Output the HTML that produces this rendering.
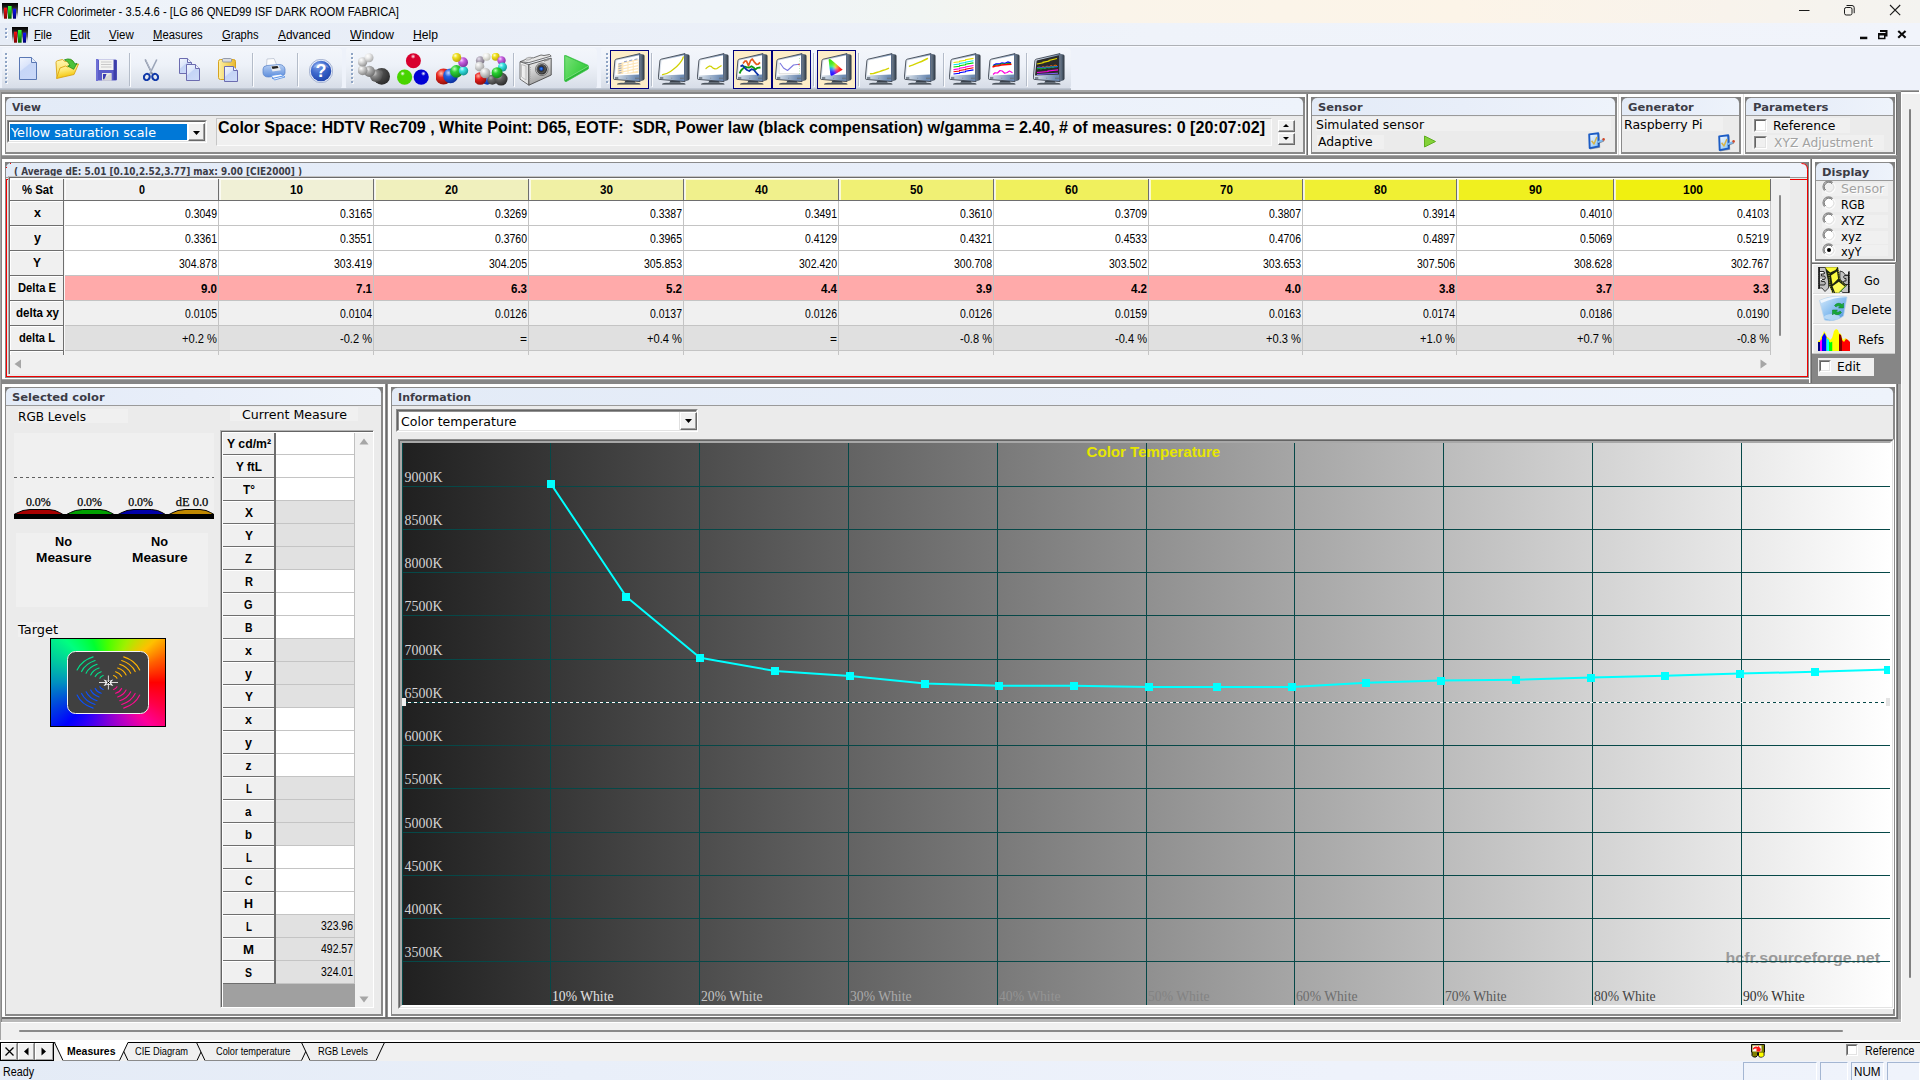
<!DOCTYPE html>
<html lang="en"><head><meta charset="utf-8"><title>HCFR Colorimeter</title>
<style>
html,body{margin:0;padding:0;background:#fff;}
body{width:1920px;height:1080px;overflow:hidden;font-family:"Liberation Sans",sans-serif;font-size:12px;color:#000;}
#app{position:relative;width:1920px;height:1080px;overflow:hidden;background:#fff;}
#app div,#app svg,#app span.a{position:absolute;box-sizing:border-box;}
.t{white-space:nowrap;line-height:1;}
.v{font-family:"DejaVu Sans","Liberation Sans",sans-serif;}
.vb{font-family:"DejaVu Sans","Liberation Sans",sans-serif;font-weight:bold;}
.s{font-family:"Liberation Serif",serif;}
/* group boxes */
.gb{border:1px solid #8a8a8a;border-right:2px solid #8a8a8a;border-bottom:2px solid #8a8a8a;background:#ebebeb;}
.gb>.hd{left:0;top:0;right:0;height:17px;background:linear-gradient(90deg,#e3ebf7 0%,#e8eef9 50%,#eef3fb 100%);border-radius:5px 5px 0 0;}
.gb>.hl{left:0;right:0;top:17px;height:1px;background:#9a9a9a;}
.gb>.cn{left:-1px;top:-1px;width:6px;height:6px;background:#808080;}
.gb>.cn.r{left:auto;right:-2px;}
.gt{font-family:"DejaVu Sans","Liberation Sans",sans-serif;font-weight:bold;font-size:11px;color:#40404a;white-space:nowrap;line-height:1;}

</style></head>
<body>
<div id="app">
<!-- titlebar -->
<div style="left:0px;top:0px;width:1920px;height:23px;background:linear-gradient(90deg,#eef3fa 0%,#eff4f8 38%,#f1f5f3 48%,#faf4ea 58%,#fcf4e8 76%,#f8f3ec 90%,#f4f3f0 100%);"></div><svg style="left:2px;top:3px;width:16px;height:16px" viewBox="0 0 16 16"><defs><linearGradient id="ai1a" x1="0" y1="0" x2="0" y2="1"><stop offset="0" stop-color="#000"/><stop offset="0.250" stop-color="#1c1c1c"/><stop offset="0.600" stop-color="#555" stop-opacity="0.850"/><stop offset="1" stop-color="#ddd" stop-opacity="0.100"/></linearGradient><linearGradient id="ai1r" x1="0" y1="0" x2="0" y2="1"><stop offset="0" stop-color="#ff1010"/><stop offset="1" stop-color="#7a0000"/></linearGradient><linearGradient id="ai1g" x1="0" y1="0" x2="0" y2="1"><stop offset="0" stop-color="#30ff30"/><stop offset="1" stop-color="#005c00"/></linearGradient><linearGradient id="ai1b" x1="0" y1="0" x2="0" y2="1"><stop offset="0" stop-color="#1010ff"/><stop offset="1" stop-color="#000070"/></linearGradient></defs><rect x="0" y="0" width="16" height="16" fill="url(#ai1a)"/><rect x="2" y="4.700" width="3" height="11" fill="url(#ai1r)"/><rect x="6" y="3" width="3.600" height="12.700" fill="url(#ai1g)"/><rect x="11" y="5.700" width="3" height="10" fill="url(#ai1b)"/></svg><div class="t" style="left:23.40px;top:3.84px;font-family:'Liberation Sans',sans-serif;font-size:12px;line-height:16px;color:#000;transform:scaleX(0.9366);transform-origin:0 0;">HCFR Colorimeter - 3.5.4.6 - [LG 86 QNED99 ISF DARK ROOM FABRICA]</div><svg style="left:1780px;top:0;width:140px;height:23px" viewBox="0 0 140 23"><g stroke="#1a1a1a" stroke-width="1" fill="none"><path d="M19 10.500h10.500"/><rect x="64.500" y="7.500" width="7.500" height="7.500" rx="1.700"/><path d="M66.500 5.500h5.500a2.200 2.200 0 0 1 2.200 2.200v5.500"/><path d="M110 5l10.200 10.200M120.200 5l-10.200 10.200" stroke-width="1.100"/></g></svg>
<!-- menubar -->
<div style="left:0px;top:23px;width:1920px;height:23px;background:linear-gradient(90deg,#e6ecf6 0%,#eaeff8 30%,#eff3fa 60%,#f1f4fb 100%);"></div><div style="left:0px;top:45px;width:1920px;height:1px;background:#aeb1b6;"></div><div style="left:6px;top:29px;width:2px;height:2px;background:#fff;"></div><div style="left:5px;top:28px;width:2px;height:2px;background:#8fa4c8;"></div><div style="left:6px;top:33px;width:2px;height:2px;background:#fff;"></div><div style="left:5px;top:32px;width:2px;height:2px;background:#8fa4c8;"></div><div style="left:6px;top:37px;width:2px;height:2px;background:#fff;"></div><div style="left:5px;top:36px;width:2px;height:2px;background:#8fa4c8;"></div><svg style="left:12px;top:27px;width:16px;height:16px" viewBox="0 0 16 16"><defs><linearGradient id="ai2a" x1="0" y1="0" x2="0" y2="1"><stop offset="0" stop-color="#000"/><stop offset="0.250" stop-color="#1c1c1c"/><stop offset="0.600" stop-color="#555" stop-opacity="0.850"/><stop offset="1" stop-color="#ddd" stop-opacity="0.100"/></linearGradient><linearGradient id="ai2r" x1="0" y1="0" x2="0" y2="1"><stop offset="0" stop-color="#ff1010"/><stop offset="1" stop-color="#7a0000"/></linearGradient><linearGradient id="ai2g" x1="0" y1="0" x2="0" y2="1"><stop offset="0" stop-color="#30ff30"/><stop offset="1" stop-color="#005c00"/></linearGradient><linearGradient id="ai2b" x1="0" y1="0" x2="0" y2="1"><stop offset="0" stop-color="#1010ff"/><stop offset="1" stop-color="#000070"/></linearGradient></defs><rect x="0" y="0" width="16" height="16" fill="url(#ai2a)"/><rect x="2" y="4.700" width="3" height="11" fill="url(#ai2r)"/><rect x="6" y="3" width="3.600" height="12.700" fill="url(#ai2g)"/><rect x="11" y="5.700" width="3" height="10" fill="url(#ai2b)"/></svg><div class="t" style="left:33.60px;top:26.84px;font-family:'Liberation Sans',sans-serif;font-size:12px;line-height:16px;color:#000;transform:scaleX(0.9305);transform-origin:0 0;"><span style="text-decoration:underline;text-underline-offset:1px;">F</span>ile</div><div class="t" style="left:70.00px;top:26.84px;font-family:'Liberation Sans',sans-serif;font-size:12px;line-height:16px;color:#000;transform:scaleX(0.9668);transform-origin:0 0;"><span style="text-decoration:underline;text-underline-offset:1px;">E</span>dit</div><div class="t" style="left:109.30px;top:26.84px;font-family:'Liberation Sans',sans-serif;font-size:12px;line-height:16px;color:#000;transform:scaleX(0.9575);transform-origin:0 0;"><span style="text-decoration:underline;text-underline-offset:1px;">V</span>iew</div><div class="t" style="left:153.40px;top:26.84px;font-family:'Liberation Sans',sans-serif;font-size:12px;line-height:16px;color:#000;transform:scaleX(0.9414);transform-origin:0 0;"><span style="text-decoration:underline;text-underline-offset:1px;">M</span>easures</div><div class="t" style="left:222.20px;top:26.84px;font-family:'Liberation Sans',sans-serif;font-size:12px;line-height:16px;color:#000;transform:scaleX(0.9299);transform-origin:0 0;"><span style="text-decoration:underline;text-underline-offset:1px;">G</span>raphs</div><div class="t" style="left:278.00px;top:26.84px;font-family:'Liberation Sans',sans-serif;font-size:12px;line-height:16px;color:#000;transform:scaleX(0.9855);transform-origin:0 0;"><span style="text-decoration:underline;text-underline-offset:1px;">A</span>dvanced</div><div class="t" style="left:350.00px;top:26.84px;font-family:'Liberation Sans',sans-serif;font-size:12px;line-height:16px;color:#000;transform:scaleX(1.0307);transform-origin:0 0;"><span style="text-decoration:underline;text-underline-offset:1px;">W</span>indow</div><div class="t" style="left:413.00px;top:26.84px;font-family:'Liberation Sans',sans-serif;font-size:12px;line-height:16px;color:#000;transform:scaleX(1.0127);transform-origin:0 0;"><span style="text-decoration:underline;text-underline-offset:1px;">H</span>elp</div><svg style="left:1850px;top:26px;width:70px;height:18px" viewBox="0 0 70 18"><g fill="#0a0a0a" stroke="none"><rect x="10" y="10.700" width="7.300" height="2.500"/><path d="M30 4h7.500v6.500h-2v-4.500h-5.500zM28 7h7.500v6.200h-7.500zM29.500 9.500v2.200h4.500v-2.200z" fill-rule="evenodd"/><path d="M47.500 5.700l1.500-1.500 2.900 2.900 2.900-2.900 1.500 1.500-2.900 2.600 2.900 2.600-1.500 1.500-2.900-2.900-2.900 2.900-1.500-1.500 2.900-2.600z"/></g></svg>
<!-- toolbar -->
<div style="left:0px;top:46px;width:1920px;height:44px;background:#eef2fa;"></div><div style="left:0px;top:46px;width:1920px;height:1px;background:#f8faff;"></div><div style="left:2px;top:48px;width:340px;height:41px;background:linear-gradient(180deg,#f3f6fb 0%,#eef2f9 40%,#e3e8f0 70%,#d6dce7 100%);border-radius:2px 4px 4px 2px;"></div><div style="left:346px;top:48px;width:251px;height:41px;background:linear-gradient(180deg,#f3f6fb 0%,#eef2f9 40%,#e3e8f0 70%,#d6dce7 100%);border-radius:2px 4px 4px 2px;"></div><div style="left:601px;top:48px;width:470px;height:41px;background:linear-gradient(180deg,#f3f6fb 0%,#eef2f9 40%,#e3e8f0 70%,#d6dce7 100%);border-radius:2px 4px 4px 2px;"></div><div style="left:0px;top:88px;width:1071px;height:2px;background:linear-gradient(180deg,#c6ceda,#aab1bb);"></div><div style="left:5px;top:53px;width:2px;height:30px;background:repeating-linear-gradient(180deg,#8ea4c4 0 2px,transparent 2px 4px);"></div><div style="left:6px;top:54px;width:2px;height:30px;background:repeating-linear-gradient(180deg,#ffffff 0 2px,transparent 2px 4px);opacity:.8;"></div><div style="left:5px;top:53px;width:2px;height:30px;background:repeating-linear-gradient(180deg,#8ea4c4 0 2px,transparent 2px 4px);"></div><div style="left:351px;top:53px;width:2px;height:30px;background:repeating-linear-gradient(180deg,#8ea4c4 0 2px,transparent 2px 4px);"></div><div style="left:352px;top:54px;width:2px;height:30px;background:repeating-linear-gradient(180deg,#ffffff 0 2px,transparent 2px 4px);opacity:.8;"></div><div style="left:351px;top:53px;width:2px;height:30px;background:repeating-linear-gradient(180deg,#8ea4c4 0 2px,transparent 2px 4px);"></div><div style="left:606px;top:53px;width:2px;height:30px;background:repeating-linear-gradient(180deg,#8ea4c4 0 2px,transparent 2px 4px);"></div><div style="left:607px;top:54px;width:2px;height:30px;background:repeating-linear-gradient(180deg,#ffffff 0 2px,transparent 2px 4px);opacity:.8;"></div><div style="left:606px;top:53px;width:2px;height:30px;background:repeating-linear-gradient(180deg,#8ea4c4 0 2px,transparent 2px 4px);"></div><svg style="left:19px;top:57px;width:18px;height:23px" viewBox="0 0 18 23"><defs><linearGradient id="g1" x1="0" y1="0" x2="0.6" y2="1"><stop offset="0" stop-color="#f2f6fe"/><stop offset="0.45" stop-color="#dbe5fb"/><stop offset="0.5" stop-color="#c6d6f7"/><stop offset="1" stop-color="#c9d8f8"/></linearGradient></defs><path d="M0.500 0.500h12l5 5v17h-17z" fill="url(#g1)" stroke="#5a78b4" stroke-width="1"/><path d="M12.500 0.500v5h5" fill="#e6eefc" stroke="#5a78b4" stroke-width="1"/></svg><svg style="left:55px;top:58px;width:24px;height:22px" viewBox="0 0 24 22"><defs><linearGradient id="g2" x1="0" y1="0" x2="0" y2="1"><stop offset="0" stop-color="#fff6b0"/><stop offset="1" stop-color="#f8d84a"/></linearGradient><linearGradient id="g3" x1="0" y1="0" x2="0.3" y2="1"><stop offset="0" stop-color="#fff9d0"/><stop offset="0.5" stop-color="#fde870"/><stop offset="1" stop-color="#f3c200"/></linearGradient></defs><path d="M1 4.500q0-1.500 1.500-1.800l5-1.200 2.500 2 7-1.500v10l-15 8z" fill="url(#g2)" stroke="#d9a514" stroke-width="0.900"/><path d="M1.500 20.500l3.500-10.500 5.500-2 2 1 11-3-4.500 10.500z" fill="url(#g3)" stroke="#d9a514" stroke-width="0.900"/><path d="M9.500 1.800q7-3 10.500 4.200l2-0.700-3.300 6-6-3.200 2.300-0.800q-2-4.300-5.500-5.500z" fill="#4cc23a" stroke="#1f8a18" stroke-width="0.800"/></svg><svg style="left:96px;top:59px;width:21px;height:22px" viewBox="0 0 21 22"><path d="M1.500 0.500h18q1.500 0 1.500 1.500v18q0 1.500-1.500 1.500h-18q-1.500 0-1.500-1.500v-18q0-1.500 1.500-1.500z" fill="#5a5cc8"/><rect x="0" y="0" width="2" height="22" fill="#6e70d6"/><rect x="17.500" y="1" width="3" height="20" fill="#3c3ea8"/><rect x="3" y="0.500" width="14.500" height="10.500" fill="#f4f4f2"/><path d="M5 3h10.500M5 5.500h10.500M5 8h10.500" stroke="#c4c4c4" stroke-width="0.900"/><rect x="6" y="14" width="9.500" height="7.500" fill="#e9e9e6"/><path d="M7 15h3.500l-2 5.500h-1.500z" fill="#3a3cb0"/><path d="M15.500 14v7.500h-9.500z" fill="#cfcfca" opacity="0.700"/></svg><div style="left:129px;top:53px;width:1px;height:33px;background:#b4bcc9;"></div><div style="left:130px;top:54px;width:1px;height:33px;background:#fbfcfe;"></div><svg style="left:143px;top:59px;width:16px;height:22px" viewBox="0 0 16 22"><path d="M2.200 0.500l7.300 15" stroke="#6e7a92" stroke-width="1.600" fill="none"/><path d="M13.800 0.500l-7.300 15" stroke="#9aa4b8" stroke-width="1.600" fill="none"/><path d="M2.500 0.800l6 12.500" stroke="#e6eaf2" stroke-width="0.600"/><ellipse cx="3.800" cy="18" rx="2.800" ry="3.200" transform="rotate(25 3.800 18)" fill="none" stroke="#1038a8" stroke-width="2.100"/><ellipse cx="12.200" cy="18" rx="2.800" ry="3.200" transform="rotate(-25 12.200 18)" fill="none" stroke="#1038a8" stroke-width="2.100"/></svg><svg style="left:179px;top:58px;width:21px;height:23px" viewBox="0 0 21 23"><defs><linearGradient id="g4" x1="0" y1="0" x2="0.700" y2="1"><stop offset="0" stop-color="#f4f7fe"/><stop offset="0.450" stop-color="#dce6fb"/><stop offset="0.500" stop-color="#c4d4f6"/><stop offset="1" stop-color="#cddaf8"/></linearGradient></defs><path d="M0.5 0.5h8l4 4v11h-12z" fill="url(#g4)" stroke="#6c6cb0" stroke-width="1"/><path d="M8.5 0.5v4h4" fill="#eef2fd" stroke="#6c6cb0" stroke-width="1"/><path d="M7.5 6.5h9l4 4v12h-13z" fill="url(#g4)" stroke="#6c6cb0" stroke-width="1"/><path d="M16.5 6.5v4h4" fill="#eef2fd" stroke="#6c6cb0" stroke-width="1"/></svg><svg style="left:218px;top:58px;width:20px;height:24px" viewBox="0 0 20 24"><defs><linearGradient id="g5" x1="0" y1="0" x2="0.700" y2="1"><stop offset="0" stop-color="#f4f7fe"/><stop offset="0.450" stop-color="#dce6fb"/><stop offset="0.500" stop-color="#c4d4f6"/><stop offset="1" stop-color="#cddaf8"/></linearGradient><linearGradient id="g6" x1="0" y1="0" x2="1" y2="0"><stop offset="0" stop-color="#fdf0a8"/><stop offset="0.500" stop-color="#f3d768"/><stop offset="1" stop-color="#e8b830"/></linearGradient></defs><rect x="0.500" y="1.500" width="17" height="20" rx="2" fill="url(#g6)" stroke="#d6a21e" stroke-width="1"/><rect x="4.500" y="0.500" width="9" height="3.500" rx="1" fill="#d8dbe2" stroke="#8c93a4" stroke-width="0.900"/><path d="M6.5 8.5h9l4 4v11h-13z" fill="url(#g5)" stroke="#6c6cb0" stroke-width="1"/><path d="M15.5 8.5v4h4" fill="#eef2fd" stroke="#6c6cb0" stroke-width="1"/></svg><div style="left:252px;top:53px;width:1px;height:33px;background:#b4bcc9;"></div><div style="left:253px;top:54px;width:1px;height:33px;background:#fbfcfe;"></div><svg style="left:262px;top:58px;width:24px;height:23px" viewBox="0 0 24 23"><defs><linearGradient id="g7" x1="0" y1="0" x2="0" y2="1"><stop offset="0" stop-color="#b8d0f4"/><stop offset="1" stop-color="#5e8edc"/></linearGradient></defs><path d="M5 1l7-0.500 3 7-10.500 1z" fill="#fdfdfd" stroke="#b4bccb" stroke-width="0.700"/><path d="M1 11q0-3 4-3.500l12-1q5 0 6 4.500v4q0 2-2.500 2.500l-14 1.500q-5 0-5.500-4z" fill="url(#g7)" stroke="#5580c8" stroke-width="0.700"/><path d="M8.500 8l8-0.800 2.500 5-8.500 1.200z" fill="#e8ebf0"/><path d="M9.500 8.500l6-0.600 1 2.200-6 0.800z" fill="#222"/><path d="M9 17.500l10-1.500 4 3-10.500 3z" fill="#fafcff" stroke="#5d94e6" stroke-width="0.900"/><path d="M10 20.500l11-2.500" stroke="#5d94e6" stroke-width="1.200"/></svg><div style="left:297px;top:53px;width:1px;height:33px;background:#b4bcc9;"></div><div style="left:298px;top:54px;width:1px;height:33px;background:#fbfcfe;"></div><svg style="left:309px;top:59px;width:24px;height:24px" viewBox="0 0 24 24"><defs><radialGradient id="g8" cx="0.350" cy="0.250" r="0.850"><stop offset="0" stop-color="#7da0ea"/><stop offset="0.450" stop-color="#3c68cc"/><stop offset="1" stop-color="#1c40a8"/></radialGradient></defs><circle cx="12" cy="12" r="11.700" fill="#e8eefa" stroke="#7b8db8" stroke-width="0.600"/><circle cx="12" cy="12" r="10.300" fill="url(#g8)"/><path d="M4 9a8.500 7 0 0 1 16 0q-8-3.500-16 0z" fill="#fff" opacity="0.250"/><text x="12" y="18.300" font-family="Liberation Sans,sans-serif" font-weight="bold" font-size="18" fill="#fff" text-anchor="middle">?</text></svg><svg style="left:358px;top:53px;width:33px;height:33px" viewBox="0 0 33 33"><defs><radialGradient id="g9" cx="0.350" cy="0.300" r="0.750"><stop offset="0" stop-color="#8c8c8c"/><stop offset="0.350" stop-color="#4a4a4a"/><stop offset="1" stop-color="#2a2a2a"/></radialGradient></defs><circle cx="23.7" cy="23.4" r="8.3" fill="url(#g9)"/><defs><radialGradient id="g10" cx="0.350" cy="0.300" r="0.750"><stop offset="0" stop-color="#d8d8d8"/><stop offset="0.350" stop-color="#8a8a8a"/><stop offset="1" stop-color="#4a4a4a"/></radialGradient></defs><circle cx="18.1" cy="22.8" r="6.2" fill="url(#g10)"/><defs><radialGradient id="g11" cx="0.350" cy="0.300" r="0.750"><stop offset="0" stop-color="#f0f0f0"/><stop offset="0.350" stop-color="#b0b0b0"/><stop offset="1" stop-color="#6a6a6a"/></radialGradient></defs><circle cx="11.4" cy="18.4" r="5.6" fill="url(#g11)"/><defs><radialGradient id="g12" cx="0.350" cy="0.300" r="0.750"><stop offset="0" stop-color="#ffffff"/><stop offset="0.350" stop-color="#d0d0d0"/><stop offset="1" stop-color="#848484"/></radialGradient></defs><circle cx="4.6" cy="17.3" r="4.9" fill="url(#g12)"/><defs><radialGradient id="g13" cx="0.350" cy="0.300" r="0.750"><stop offset="0" stop-color="#ffffff"/><stop offset="0.350" stop-color="#dcdcdc"/><stop offset="1" stop-color="#909090"/></radialGradient></defs><circle cx="4.6" cy="8.9" r="4.7" fill="url(#g13)"/><defs><radialGradient id="g14" cx="0.350" cy="0.300" r="0.750"><stop offset="0" stop-color="#ffffff"/><stop offset="0.350" stop-color="#ececec"/><stop offset="1" stop-color="#a8a8a8"/></radialGradient></defs><circle cx="11" cy="4.8" r="4.5" fill="url(#g14)"/></svg><svg style="left:396px;top:53px;width:34px;height:33px" viewBox="0 0 34 33"><circle cx="17.4" cy="7.7" r="7.5" fill="#d8002e"/><defs><radialGradient id="g15"><stop offset="0" stop-color="#fff" stop-opacity="0.950"/><stop offset="1" stop-color="#fff" stop-opacity="0"/></radialGradient></defs><circle cx="17.099999999999998" cy="3.5" r="2.40" fill="url(#g15)"/><circle cx="8.6" cy="24.1" r="7.6" fill="#48d400"/><defs><radialGradient id="g16"><stop offset="0" stop-color="#fff" stop-opacity="0.950"/><stop offset="1" stop-color="#fff" stop-opacity="0"/></radialGradient></defs><circle cx="6.6" cy="20.6" r="2.43" fill="url(#g16)"/><circle cx="25.2" cy="24.1" r="7.6" fill="#0000d4"/><defs><radialGradient id="g17"><stop offset="0" stop-color="#fff" stop-opacity="0.950"/><stop offset="1" stop-color="#fff" stop-opacity="0"/></radialGradient></defs><circle cx="27.4" cy="20.6" r="2.43" fill="url(#g17)"/></svg><svg style="left:436px;top:53px;width:33px;height:33px" viewBox="0 0 33 33"><defs><radialGradient id="g18" cx="0.350" cy="0.300" r="0.750"><stop offset="0" stop-color="#ffc0b0"/><stop offset="0.350" stop-color="#e82820"/><stop offset="1" stop-color="#8c0c08"/></radialGradient></defs><circle cx="7.5" cy="23.6" r="8" fill="url(#g18)"/><defs><radialGradient id="g19" cx="0.350" cy="0.300" r="0.750"><stop offset="0" stop-color="#c0d8ff"/><stop offset="0.350" stop-color="#2060e0"/><stop offset="1" stop-color="#0a2c98"/></radialGradient></defs><circle cx="14.6" cy="22.8" r="7.4" fill="url(#g19)"/><defs><radialGradient id="g20" cx="0.350" cy="0.300" r="0.750"><stop offset="0" stop-color="#c0ffb8"/><stop offset="0.350" stop-color="#30d038"/><stop offset="1" stop-color="#108018"/></radialGradient></defs><circle cx="20.4" cy="18.4" r="6.3" fill="url(#g20)"/><defs><radialGradient id="g21" cx="0.350" cy="0.300" r="0.750"><stop offset="0" stop-color="#d0ffff"/><stop offset="0.350" stop-color="#38e0e0"/><stop offset="1" stop-color="#109090"/></radialGradient></defs><circle cx="27.5" cy="17.7" r="4.7" fill="url(#g21)"/><defs><radialGradient id="g22" cx="0.350" cy="0.300" r="0.750"><stop offset="0" stop-color="#f8d0ff"/><stop offset="0.350" stop-color="#c860e0"/><stop offset="1" stop-color="#7c2c98"/></radialGradient></defs><circle cx="27.1" cy="9.2" r="4.9" fill="url(#g22)"/><defs><radialGradient id="g23" cx="0.350" cy="0.300" r="0.750"><stop offset="0" stop-color="#ffffd0"/><stop offset="0.350" stop-color="#f0e020"/><stop offset="1" stop-color="#b8a008"/></radialGradient></defs><circle cx="20.7" cy="4.5" r="4.5" fill="url(#g23)"/></svg><svg style="left:475px;top:53px;width:33px;height:33px" viewBox="0 0 33 33"><defs><radialGradient id="g24" cx="0.350" cy="0.300" r="0.750"><stop offset="0" stop-color="#a8c8ff"/><stop offset="0.350" stop-color="#1858e0"/><stop offset="1" stop-color="#0a2c98"/></radialGradient></defs><circle cx="12.3" cy="26.8" r="5" fill="url(#g24)"/><defs><radialGradient id="g25" cx="0.350" cy="0.300" r="0.750"><stop offset="0" stop-color="#b0b0b0"/><stop offset="0.350" stop-color="#686868"/><stop offset="1" stop-color="#383838"/></radialGradient></defs><circle cx="17.3" cy="26.8" r="5" fill="url(#g25)"/><defs><radialGradient id="g26" cx="0.350" cy="0.300" r="0.750"><stop offset="0" stop-color="#a8a8a8"/><stop offset="0.350" stop-color="#606060"/><stop offset="1" stop-color="#282828"/></radialGradient></defs><circle cx="26.1" cy="26.1" r="6.5" fill="url(#g26)"/><defs><radialGradient id="g27" cx="0.350" cy="0.300" r="0.750"><stop offset="0" stop-color="#ffb0a0"/><stop offset="0.350" stop-color="#e82020"/><stop offset="1" stop-color="#8c0c08"/></radialGradient></defs><circle cx="5.2" cy="25.5" r="6.3" fill="url(#g27)"/><defs><radialGradient id="g28" cx="0.350" cy="0.300" r="0.750"><stop offset="0" stop-color="#e8e0f0"/><stop offset="0.350" stop-color="#b0a8b8"/><stop offset="1" stop-color="#787080"/></radialGradient></defs><circle cx="5.2" cy="7.5" r="4.3" fill="url(#g28)"/><defs><radialGradient id="g29" cx="0.350" cy="0.300" r="0.750"><stop offset="0" stop-color="#ffffff"/><stop offset="0.350" stop-color="#dcdcdc"/><stop offset="1" stop-color="#9c9c9c"/></radialGradient></defs><circle cx="4.5" cy="13.6" r="4.8" fill="url(#g29)"/><defs><radialGradient id="g30" cx="0.350" cy="0.300" r="0.750"><stop offset="0" stop-color="#ffffff"/><stop offset="0.350" stop-color="#d8d8d8"/><stop offset="1" stop-color="#909090"/></radialGradient></defs><circle cx="10.2" cy="20" r="5.2" fill="url(#g30)"/><defs><radialGradient id="g31" cx="0.350" cy="0.300" r="0.750"><stop offset="0" stop-color="#ffffff"/><stop offset="0.350" stop-color="#f0f0ec"/><stop offset="1" stop-color="#c0c0b4"/></radialGradient></defs><circle cx="11.6" cy="3.8" r="4" fill="url(#g31)"/><defs><radialGradient id="g32" cx="0.350" cy="0.300" r="0.750"><stop offset="0" stop-color="#ffffc8"/><stop offset="0.350" stop-color="#f0e020"/><stop offset="1" stop-color="#b8a008"/></radialGradient></defs><circle cx="20.7" cy="3.8" r="4" fill="url(#g32)"/><defs><radialGradient id="g33" cx="0.350" cy="0.300" r="0.750"><stop offset="0" stop-color="#f8d0ff"/><stop offset="0.350" stop-color="#c860e0"/><stop offset="1" stop-color="#7c2c98"/></radialGradient></defs><circle cx="26.5" cy="7.5" r="4.2" fill="url(#g33)"/><defs><radialGradient id="g34" cx="0.350" cy="0.300" r="0.750"><stop offset="0" stop-color="#d0ffff"/><stop offset="0.350" stop-color="#38e0e0"/><stop offset="1" stop-color="#109090"/></radialGradient></defs><circle cx="27.5" cy="14" r="4.5" fill="url(#g34)"/><defs><radialGradient id="g35" cx="0.350" cy="0.300" r="0.750"><stop offset="0" stop-color="#b8ffb0"/><stop offset="0.350" stop-color="#28d030"/><stop offset="1" stop-color="#108018"/></radialGradient></defs><circle cx="22.1" cy="19.7" r="5.5" fill="url(#g35)"/></svg><div style="left:513px;top:53px;width:1px;height:33px;background:#b4bcc9;"></div><div style="left:514px;top:54px;width:1px;height:33px;background:#fbfcfe;"></div><svg style="left:519px;top:54px;width:34px;height:32px" viewBox="0 0 34 32"><defs><linearGradient id="g36" x1="0" y1="0" x2="0.300" y2="1"><stop offset="0" stop-color="#f4f4f4"/><stop offset="0.500" stop-color="#d0d0d0"/><stop offset="1" stop-color="#9c9c9c"/></linearGradient><linearGradient id="g38" x1="0" y1="0" x2="1" y2="0"><stop offset="0" stop-color="#f8f8f8"/><stop offset="1" stop-color="#dcdcdc"/></linearGradient><radialGradient id="g37" cx="0.450" cy="0.450" r="0.550"><stop offset="0" stop-color="#40a0ff"/><stop offset="0.250" stop-color="#1048c0"/><stop offset="0.450" stop-color="#303030"/><stop offset="0.700" stop-color="#585858"/><stop offset="1" stop-color="#202020"/></radialGradient></defs><path d="M1 5.800l9-3.800 4.500-0.200 7.500-2.800 3 0.500 5.500-1 1.700 1.600-22.300 6.500z" transform="translate(0 2)" fill="#e8e8e8" stroke="#505050" stroke-width="0.800"/><path d="M1 7.800l8.900 2.800v20.600l-8.900-6.100z" fill="url(#g38)" stroke="#505050" stroke-width="0.800"/><path d="M2.500 10.500l4.500 1.500v14l-4.500-3z" fill="none" stroke="#b4b4b4" stroke-width="0.800"/><path d="M9.900 10.600l22.300-6.500v16.900l-22.300 10.200z" fill="url(#g36)" stroke="#484848" stroke-width="0.900"/><path d="M11.300 13v16" stroke="#a8a8a8" stroke-width="1.200" stroke-dasharray="1 1.200"/><path d="M25 5.500l5.500-1.600v2.200l-5.500 1.600z" fill="#8c8c8c"/><ellipse cx="9.500" cy="4.700" rx="3" ry="1.300" transform="rotate(-14 9.500 4.700)" fill="#d4d4d4" stroke="#8c8c8c" stroke-width="0.500"/><circle cx="22.800" cy="15.300" r="6.300" fill="#c8c8c8" stroke="#505050" stroke-width="0.700"/><circle cx="22.800" cy="15.300" r="5.200" fill="url(#g37)"/></svg><svg style="left:564px;top:55px;width:25px;height:27px" viewBox="0 0 25 27"><defs><linearGradient id="g39" x1="0" y1="0" x2="1" y2="0.600"><stop offset="0" stop-color="#78e078"/><stop offset="0.600" stop-color="#4cd450"/><stop offset="1" stop-color="#34c83c"/></linearGradient></defs><path d="M0.500 0.800q0-0.900 0.900-0.500l22.400 9.900q0.700 0.400 0.700 1.200v1.800q0 0.700-0.700 1.100l-21.800 12.400q-0.700 0.300-1-0.400l-0.500-1z" fill="#2cb838" stroke="#38c444" stroke-width="0.700"/><path d="M1.200 1l22.600 10-22.600 13z" fill="url(#g39)"/><path d="M1 24.500l23-13.200" stroke="#a0f0a0" stroke-width="0.800" opacity="0.800"/></svg><div style="left:610px;top:50px;width:39px;height:39px;background:#fdedc8;border:1px solid #00007c;"></div><div style="left:733px;top:50px;width:39px;height:39px;background:#fdedc8;border:1px solid #00007c;"></div><div style="left:772px;top:50px;width:39px;height:39px;background:#fdedc8;border:1px solid #00007c;"></div><div style="left:817px;top:50px;width:39px;height:39px;background:#fdedc8;border:1px solid #00007c;"></div><svg style="left:613px;top:53px;width:32px;height:32px" viewBox="0 0 32 32"><defs><linearGradient id="g40" x1="0" y1="0" x2="1" y2="0"><stop offset="0" stop-color="#a8b8cc"/><stop offset="0.350" stop-color="#5a6a7c"/><stop offset="1" stop-color="#2a323c"/></linearGradient><linearGradient id="g41" x1="0" y1="0" x2="1" y2="0.200"><stop offset="0" stop-color="#f0f3f7"/><stop offset="0.450" stop-color="#bccada"/><stop offset="1" stop-color="#6c8ab2"/></linearGradient><linearGradient id="g42" x1="0" y1="0" x2="0" y2="1"><stop offset="0" stop-color="#6a7480"/><stop offset="1" stop-color="#2c3238"/></linearGradient></defs><path d="M12.500 27.500h9l1.200 2.200h-11.400z" fill="#39424c"/><path d="M4 31.500q0-1.700 4-1.800h16q3.500 0.100 3.500 1.800z" fill="url(#g42)"/><path d="M26.800 0.800l3.500 0.600q1.200 0.300 1.200 1.500v22.600q0 1.200-1 1.700l-3.700 1.400z" fill="url(#g40)"/><path d="M3.200 6.200l23.800-5.600v28l-25.800-2.200q-1-0.200-0.900-1.200l1.600-17.500q0.200-1.200 1.300-1.500z" fill="url(#g41)" stroke="#3e4652" stroke-width="0.900"/><path d="M3.600 7.600l22.400-5.300v19.300l-24 1z" fill="#ffffff"/><rect x="2" y="24.300" width="3.300" height="1.400" fill="#5a6470"/><rect x="22" y="24.600" width="4" height="1.500" fill="#6a7888"/><rect x="13" y="24.700" width="1.300" height="1.100" fill="#8a98aa"/><g fill="#fde2ae"><path d="M5 10.500l20.500-4.500v14l-21 1.200z" fill="#fde6b8"/></g><g fill="#fff"><rect x="10.3" y="10.6" width="4.200" height="1.700" transform="skewY(-12) translate(0 2.16)"/><rect x="15.5" y="9.5" width="4.200" height="1.700" transform="skewY(-12) translate(0 3.25)"/><rect x="20.7" y="8.4" width="4.200" height="1.700" transform="skewY(-12) translate(0 4.35)"/><rect x="10.3" y="13.5" width="4.200" height="1.700" transform="skewY(-12) translate(0 2.16)"/><rect x="15.5" y="12.4" width="4.200" height="1.700" transform="skewY(-12) translate(0 3.25)"/><rect x="20.7" y="11.3" width="4.200" height="1.700" transform="skewY(-12) translate(0 4.35)"/><rect x="10.3" y="16.4" width="4.200" height="1.700" transform="skewY(-12) translate(0 2.16)"/><rect x="15.5" y="15.3" width="4.200" height="1.700" transform="skewY(-12) translate(0 3.25)"/><rect x="20.7" y="14.2" width="4.200" height="1.700" transform="skewY(-12) translate(0 4.35)"/><rect x="10.3" y="19.3" width="4.200" height="1.700" transform="skewY(-12) translate(0 2.16)"/><rect x="15.5" y="18.2" width="4.200" height="1.700" transform="skewY(-12) translate(0 3.25)"/><rect x="20.7" y="17.1" width="4.200" height="1.700" transform="skewY(-12) translate(0 4.35)"/></g><g stroke="#8a98c0" stroke-width="0.900"><path d="M5.500 11.0l3-0.600"/><path d="M5.500 13.3l3-0.600"/><path d="M5.500 15.6l3-0.600"/><path d="M5.500 17.9l3-0.600"/><path d="M5.500 20.2l3-0.600"/><path d="M11.0 8.8l3-0.700"/><path d="M16.2 7.7l3-0.700"/><path d="M21.4 6.6l3-0.700"/></g></svg><div style="left:651px;top:53px;width:1px;height:33px;background:#b4bcc9;"></div><div style="left:652px;top:54px;width:1px;height:33px;background:#fbfcfe;"></div><svg style="left:658px;top:53px;width:32px;height:32px" viewBox="0 0 32 32"><defs><linearGradient id="g43" x1="0" y1="0" x2="1" y2="0"><stop offset="0" stop-color="#a8b8cc"/><stop offset="0.350" stop-color="#5a6a7c"/><stop offset="1" stop-color="#2a323c"/></linearGradient><linearGradient id="g44" x1="0" y1="0" x2="1" y2="0.200"><stop offset="0" stop-color="#f0f3f7"/><stop offset="0.450" stop-color="#bccada"/><stop offset="1" stop-color="#6c8ab2"/></linearGradient><linearGradient id="g45" x1="0" y1="0" x2="0" y2="1"><stop offset="0" stop-color="#6a7480"/><stop offset="1" stop-color="#2c3238"/></linearGradient></defs><path d="M12.500 27.500h9l1.200 2.200h-11.400z" fill="#39424c"/><path d="M4 31.500q0-1.700 4-1.800h16q3.500 0.100 3.500 1.800z" fill="url(#g45)"/><path d="M26.800 0.800l3.500 0.600q1.200 0.300 1.200 1.500v22.600q0 1.200-1 1.700l-3.700 1.400z" fill="url(#g43)"/><path d="M3.200 6.200l23.800-5.600v28l-25.800-2.200q-1-0.200-0.900-1.200l1.600-17.500q0.200-1.200 1.300-1.500z" fill="url(#g44)" stroke="#3e4652" stroke-width="0.900"/><path d="M3.600 7.600l22.400-5.300v19.300l-24 1z" fill="#ffffff"/><rect x="2" y="24.300" width="3.300" height="1.400" fill="#5a6470"/><rect x="22" y="24.600" width="4" height="1.500" fill="#6a7888"/><rect x="13" y="24.700" width="1.300" height="1.100" fill="#8a98aa"/><path d="M4.500 21.600q3.500-0.200 8-3.200 7.500-5 11-10.500 1.500-2.300 1.800-4" fill="none" stroke="#d0d000" stroke-width="1.250" stroke-linecap="round"/></svg><svg style="left:697px;top:53px;width:32px;height:32px" viewBox="0 0 32 32"><defs><linearGradient id="g46" x1="0" y1="0" x2="1" y2="0"><stop offset="0" stop-color="#a8b8cc"/><stop offset="0.350" stop-color="#5a6a7c"/><stop offset="1" stop-color="#2a323c"/></linearGradient><linearGradient id="g47" x1="0" y1="0" x2="1" y2="0.200"><stop offset="0" stop-color="#f0f3f7"/><stop offset="0.450" stop-color="#bccada"/><stop offset="1" stop-color="#6c8ab2"/></linearGradient><linearGradient id="g48" x1="0" y1="0" x2="0" y2="1"><stop offset="0" stop-color="#6a7480"/><stop offset="1" stop-color="#2c3238"/></linearGradient></defs><path d="M12.500 27.500h9l1.200 2.200h-11.400z" fill="#39424c"/><path d="M4 31.500q0-1.700 4-1.800h16q3.500 0.100 3.500 1.800z" fill="url(#g48)"/><path d="M26.800 0.800l3.500 0.600q1.200 0.300 1.200 1.500v22.600q0 1.200-1 1.700l-3.700 1.400z" fill="url(#g46)"/><path d="M3.200 6.200l23.800-5.600v28l-25.800-2.200q-1-0.200-0.900-1.200l1.600-17.500q0.200-1.200 1.300-1.500z" fill="url(#g47)" stroke="#3e4652" stroke-width="0.900"/><path d="M3.600 7.600l22.400-5.300v19.300l-24 1z" fill="#ffffff"/><rect x="2" y="24.300" width="3.300" height="1.400" fill="#5a6470"/><rect x="22" y="24.600" width="4" height="1.500" fill="#6a7888"/><rect x="13" y="24.700" width="1.300" height="1.100" fill="#8a98aa"/><path d="M9 15.500l1.500-1.200 2-1.300 1.500 0.300 2 1.800 2 0.800 2-0.300 2.200-1.600 2-1.200" fill="none" stroke="#d0d000" stroke-width="1.250" stroke-linecap="round" stroke-linejoin="round"/></svg><svg style="left:736px;top:53px;width:32px;height:32px" viewBox="0 0 32 32"><defs><linearGradient id="g49" x1="0" y1="0" x2="1" y2="0"><stop offset="0" stop-color="#a8b8cc"/><stop offset="0.350" stop-color="#5a6a7c"/><stop offset="1" stop-color="#2a323c"/></linearGradient><linearGradient id="g50" x1="0" y1="0" x2="1" y2="0.200"><stop offset="0" stop-color="#f0f3f7"/><stop offset="0.450" stop-color="#bccada"/><stop offset="1" stop-color="#6c8ab2"/></linearGradient><linearGradient id="g51" x1="0" y1="0" x2="0" y2="1"><stop offset="0" stop-color="#6a7480"/><stop offset="1" stop-color="#2c3238"/></linearGradient></defs><path d="M12.500 27.500h9l1.200 2.200h-11.400z" fill="#39424c"/><path d="M4 31.500q0-1.700 4-1.800h16q3.500 0.100 3.500 1.800z" fill="url(#g51)"/><path d="M26.800 0.800l3.500 0.600q1.200 0.300 1.200 1.500v22.600q0 1.200-1 1.700l-3.700 1.400z" fill="url(#g49)"/><path d="M3.200 6.200l23.800-5.600v28l-25.800-2.200q-1-0.200-0.900-1.200l1.600-17.500q0.200-1.200 1.300-1.500z" fill="url(#g50)" stroke="#3e4652" stroke-width="0.900"/><path d="M3.600 7.600l22.400-5.300v19.300l-24 1z" fill="#ffffff"/><rect x="2" y="24.300" width="3.300" height="1.400" fill="#5a6470"/><rect x="22" y="24.600" width="4" height="1.500" fill="#6a7888"/><rect x="13" y="24.700" width="1.300" height="1.100" fill="#8a98aa"/><path d="M7 10.500l2-2.500 1.500 0.200 2 4.500 2-5 1.700-1.700 2 2.800 2.300 2.500 1.800-0.200 1.700-1.800" fill="none" stroke="#e65a1c" stroke-width="1.700" stroke-linejoin="round"/><path d="M3.500 20.500l1.500-3 2-2 1.800-2 2.200 0.800 2.300 0.200 2.200-1.300 2 1.200 1.800 2.200 2.200-1.800 3-0.300" fill="none" stroke="#109a10" stroke-width="1.800" stroke-linejoin="round"/><path d="M4.500 13.500l2-1.300 1.500 2 3 2.800 2.200 1 2.300-1.800 2.500 0.800 2 2.500 2.500 2.800" fill="none" stroke="#0830a8" stroke-width="1.800" stroke-linejoin="round"/></svg><svg style="left:775px;top:53px;width:32px;height:32px" viewBox="0 0 32 32"><defs><linearGradient id="g52" x1="0" y1="0" x2="1" y2="0"><stop offset="0" stop-color="#a8b8cc"/><stop offset="0.350" stop-color="#5a6a7c"/><stop offset="1" stop-color="#2a323c"/></linearGradient><linearGradient id="g53" x1="0" y1="0" x2="1" y2="0.200"><stop offset="0" stop-color="#f0f3f7"/><stop offset="0.450" stop-color="#bccada"/><stop offset="1" stop-color="#6c8ab2"/></linearGradient><linearGradient id="g54" x1="0" y1="0" x2="0" y2="1"><stop offset="0" stop-color="#6a7480"/><stop offset="1" stop-color="#2c3238"/></linearGradient></defs><path d="M12.500 27.500h9l1.200 2.200h-11.400z" fill="#39424c"/><path d="M4 31.500q0-1.700 4-1.800h16q3.500 0.100 3.500 1.800z" fill="url(#g54)"/><path d="M26.800 0.800l3.500 0.600q1.200 0.300 1.200 1.500v22.600q0 1.200-1 1.700l-3.700 1.400z" fill="url(#g52)"/><path d="M3.200 6.200l23.800-5.600v28l-25.800-2.200q-1-0.200-0.900-1.200l1.600-17.500q0.200-1.200 1.300-1.500z" fill="url(#g53)" stroke="#3e4652" stroke-width="0.900"/><path d="M3.600 7.600l22.400-5.300v19.300l-24 1z" fill="#ffffff"/><rect x="2" y="24.300" width="3.300" height="1.400" fill="#5a6470"/><rect x="22" y="24.600" width="4" height="1.500" fill="#6a7888"/><rect x="13" y="24.700" width="1.300" height="1.100" fill="#8a98aa"/><path d="M4 20.800h21.500M4 9.500v11.300" stroke="#c8c8c8" stroke-width="0.700" fill="none"/><path d="M24.500 5v16" stroke="#a8e0a0" stroke-width="0.800" stroke-dasharray="1 1.500"/><path d="M5 10l3.500 5 4 2.500 6-5.500 5.500-0.700" fill="none" stroke="#7c78e0" stroke-width="1.100" stroke-linejoin="round"/><circle cx="24" cy="11.500" r="0.800" fill="#e04040"/></svg><div style="left:813px;top:53px;width:1px;height:33px;background:#b4bcc9;"></div><div style="left:814px;top:54px;width:1px;height:33px;background:#fbfcfe;"></div><svg style="left:820px;top:53px;width:32px;height:32px" viewBox="0 0 32 32"><defs><linearGradient id="g61" x1="0" y1="0" x2="1" y2="0"><stop offset="0" stop-color="#a8b8cc"/><stop offset="0.350" stop-color="#5a6a7c"/><stop offset="1" stop-color="#2a323c"/></linearGradient><linearGradient id="g62" x1="0" y1="0" x2="1" y2="0.200"><stop offset="0" stop-color="#f0f3f7"/><stop offset="0.450" stop-color="#bccada"/><stop offset="1" stop-color="#6c8ab2"/></linearGradient><linearGradient id="g63" x1="0" y1="0" x2="0" y2="1"><stop offset="0" stop-color="#6a7480"/><stop offset="1" stop-color="#2c3238"/></linearGradient></defs><path d="M12.500 27.500h9l1.200 2.200h-11.400z" fill="#39424c"/><path d="M4 31.500q0-1.700 4-1.800h16q3.500 0.100 3.500 1.800z" fill="url(#g63)"/><path d="M26.800 0.800l3.500 0.600q1.200 0.300 1.200 1.500v22.600q0 1.200-1 1.700l-3.700 1.400z" fill="url(#g61)"/><path d="M3.200 6.200l23.800-5.600v28l-25.800-2.200q-1-0.200-0.900-1.200l1.600-17.500q0.200-1.200 1.300-1.500z" fill="url(#g62)" stroke="#3e4652" stroke-width="0.900"/><path d="M3.600 7.600l22.400-5.300v19.300l-24 1z" fill="#ffffff"/><rect x="2" y="24.300" width="3.300" height="1.400" fill="#5a6470"/><rect x="22" y="24.600" width="4" height="1.500" fill="#6a7888"/><rect x="13" y="24.700" width="1.300" height="1.100" fill="#8a98aa"/><path d="M8.600 6.500q1.200-1 2.300 0l11.800 10.300-10.600 5.900q-1.300 0.500-1.700-1z" fill="#ffffff"/><defs><radialGradient id="g55" gradientUnits="userSpaceOnUse" cx="16.5" cy="11.3" r="6"><stop offset="0" stop-color="#f8f000" stop-opacity="0.9"/><stop offset="0.35" stop-color="#f8f000" stop-opacity="0.72"/><stop offset="1" stop-color="#f8f000" stop-opacity="0"/></radialGradient></defs><path d="M8.600 6.500q1.200-1 2.300 0l11.800 10.300-10.600 5.900q-1.300 0.500-1.700-1z" fill="url(#g55)"/><defs><radialGradient id="g56" gradientUnits="userSpaceOnUse" cx="9.8" cy="15" r="6"><stop offset="0" stop-color="#00e8e8" stop-opacity="0.9"/><stop offset="0.35" stop-color="#00e8e8" stop-opacity="0.72"/><stop offset="1" stop-color="#00e8e8" stop-opacity="0"/></radialGradient></defs><path d="M8.600 6.500q1.200-1 2.300 0l11.800 10.300-10.600 5.900q-1.300 0.500-1.700-1z" fill="url(#g56)"/><defs><radialGradient id="g57" gradientUnits="userSpaceOnUse" cx="17" cy="20.3" r="5"><stop offset="0" stop-color="#ff20ff" stop-opacity="0.8"/><stop offset="0.35" stop-color="#ff20ff" stop-opacity="0.64"/><stop offset="1" stop-color="#ff20ff" stop-opacity="0"/></radialGradient></defs><path d="M8.600 6.500q1.200-1 2.300 0l11.800 10.300-10.600 5.900q-1.300 0.500-1.700-1z" fill="url(#g57)"/><defs><radialGradient id="g58" gradientUnits="userSpaceOnUse" cx="9.7" cy="6.5" r="10"><stop offset="0" stop-color="#30e400" stop-opacity="1.0"/><stop offset="0.45" stop-color="#30e400" stop-opacity="0.80"/><stop offset="1" stop-color="#30e400" stop-opacity="0"/></radialGradient></defs><path d="M8.600 6.500q1.200-1 2.300 0l11.800 10.300-10.600 5.900q-1.300 0.500-1.700-1z" fill="url(#g58)"/><defs><radialGradient id="g59" gradientUnits="userSpaceOnUse" cx="11.5" cy="22.5" r="9"><stop offset="0" stop-color="#1400ff" stop-opacity="1.0"/><stop offset="0.4" stop-color="#1400ff" stop-opacity="0.80"/><stop offset="1" stop-color="#1400ff" stop-opacity="0"/></radialGradient></defs><path d="M8.600 6.500q1.200-1 2.300 0l11.800 10.300-10.600 5.900q-1.300 0.500-1.700-1z" fill="url(#g59)"/><defs><radialGradient id="g60" gradientUnits="userSpaceOnUse" cx="22.7" cy="16.8" r="9"><stop offset="0" stop-color="#ff0000" stop-opacity="1.0"/><stop offset="0.4" stop-color="#ff0000" stop-opacity="0.80"/><stop offset="1" stop-color="#ff0000" stop-opacity="0"/></radialGradient></defs><path d="M8.600 6.500q1.200-1 2.300 0l11.800 10.300-10.600 5.900q-1.300 0.500-1.700-1z" fill="url(#g60)"/></svg><div style="left:858px;top:53px;width:1px;height:33px;background:#b4bcc9;"></div><div style="left:859px;top:54px;width:1px;height:33px;background:#fbfcfe;"></div><svg style="left:865px;top:53px;width:32px;height:32px" viewBox="0 0 32 32"><defs><linearGradient id="g64" x1="0" y1="0" x2="1" y2="0"><stop offset="0" stop-color="#a8b8cc"/><stop offset="0.350" stop-color="#5a6a7c"/><stop offset="1" stop-color="#2a323c"/></linearGradient><linearGradient id="g65" x1="0" y1="0" x2="1" y2="0.200"><stop offset="0" stop-color="#f0f3f7"/><stop offset="0.450" stop-color="#bccada"/><stop offset="1" stop-color="#6c8ab2"/></linearGradient><linearGradient id="g66" x1="0" y1="0" x2="0" y2="1"><stop offset="0" stop-color="#6a7480"/><stop offset="1" stop-color="#2c3238"/></linearGradient></defs><path d="M12.500 27.500h9l1.200 2.200h-11.400z" fill="#39424c"/><path d="M4 31.500q0-1.700 4-1.800h16q3.500 0.100 3.500 1.800z" fill="url(#g66)"/><path d="M26.800 0.800l3.500 0.600q1.200 0.300 1.200 1.500v22.600q0 1.200-1 1.700l-3.700 1.400z" fill="url(#g64)"/><path d="M3.200 6.200l23.800-5.600v28l-25.800-2.200q-1-0.200-0.900-1.200l1.600-17.500q0.200-1.200 1.300-1.500z" fill="url(#g65)" stroke="#3e4652" stroke-width="0.900"/><path d="M3.600 7.600l22.400-5.300v19.300l-24 1z" fill="#ffffff"/><rect x="2" y="24.300" width="3.300" height="1.400" fill="#5a6470"/><rect x="22" y="24.600" width="4" height="1.500" fill="#6a7888"/><rect x="13" y="24.700" width="1.300" height="1.100" fill="#8a98aa"/><path d="M5.500 20.800l3-0.300 3-1 3-0.800 3-1.200 3-0.800 3-1.400" fill="none" stroke="#d4d400" stroke-width="1.400" stroke-linecap="round"/></svg><svg style="left:904px;top:53px;width:32px;height:32px" viewBox="0 0 32 32"><defs><linearGradient id="g67" x1="0" y1="0" x2="1" y2="0"><stop offset="0" stop-color="#a8b8cc"/><stop offset="0.350" stop-color="#5a6a7c"/><stop offset="1" stop-color="#2a323c"/></linearGradient><linearGradient id="g68" x1="0" y1="0" x2="1" y2="0.200"><stop offset="0" stop-color="#f0f3f7"/><stop offset="0.450" stop-color="#bccada"/><stop offset="1" stop-color="#6c8ab2"/></linearGradient><linearGradient id="g69" x1="0" y1="0" x2="0" y2="1"><stop offset="0" stop-color="#6a7480"/><stop offset="1" stop-color="#2c3238"/></linearGradient></defs><path d="M12.500 27.500h9l1.200 2.200h-11.400z" fill="#39424c"/><path d="M4 31.500q0-1.700 4-1.800h16q3.500 0.100 3.500 1.800z" fill="url(#g69)"/><path d="M26.800 0.800l3.500 0.600q1.200 0.300 1.200 1.500v22.600q0 1.200-1 1.700l-3.700 1.400z" fill="url(#g67)"/><path d="M3.200 6.200l23.800-5.600v28l-25.800-2.200q-1-0.200-0.900-1.200l1.600-17.500q0.200-1.200 1.300-1.500z" fill="url(#g68)" stroke="#3e4652" stroke-width="0.900"/><path d="M3.600 7.600l22.400-5.300v19.300l-24 1z" fill="#ffffff"/><rect x="2" y="24.300" width="3.300" height="1.400" fill="#5a6470"/><rect x="22" y="24.600" width="4" height="1.500" fill="#6a7888"/><rect x="13" y="24.700" width="1.300" height="1.100" fill="#8a98aa"/><path d="M5.500 13.200l3-1 3-1.300 3-1.200 3-1.200 3-1.500 3-1.500" fill="none" stroke="#d4d400" stroke-width="1.400" stroke-linecap="round"/></svg><div style="left:943px;top:53px;width:1px;height:33px;background:#b4bcc9;"></div><div style="left:944px;top:54px;width:1px;height:33px;background:#fbfcfe;"></div><svg style="left:949px;top:53px;width:32px;height:32px" viewBox="0 0 32 32"><defs><linearGradient id="g70" x1="0" y1="0" x2="1" y2="0"><stop offset="0" stop-color="#a8b8cc"/><stop offset="0.350" stop-color="#5a6a7c"/><stop offset="1" stop-color="#2a323c"/></linearGradient><linearGradient id="g71" x1="0" y1="0" x2="1" y2="0.200"><stop offset="0" stop-color="#f0f3f7"/><stop offset="0.450" stop-color="#bccada"/><stop offset="1" stop-color="#6c8ab2"/></linearGradient><linearGradient id="g72" x1="0" y1="0" x2="0" y2="1"><stop offset="0" stop-color="#6a7480"/><stop offset="1" stop-color="#2c3238"/></linearGradient></defs><path d="M12.500 27.500h9l1.200 2.200h-11.400z" fill="#39424c"/><path d="M4 31.500q0-1.700 4-1.800h16q3.500 0.100 3.500 1.800z" fill="url(#g72)"/><path d="M26.800 0.800l3.500 0.600q1.200 0.300 1.200 1.500v22.600q0 1.200-1 1.700l-3.700 1.400z" fill="url(#g70)"/><path d="M3.200 6.200l23.800-5.600v28l-25.800-2.200q-1-0.200-0.900-1.200l1.600-17.500q0.200-1.200 1.300-1.500z" fill="url(#g71)" stroke="#3e4652" stroke-width="0.900"/><path d="M3.600 7.600l22.400-5.300v19.300l-24 1z" fill="#ffffff"/><rect x="2" y="24.300" width="3.300" height="1.400" fill="#5a6470"/><rect x="22" y="24.600" width="4" height="1.500" fill="#6a7888"/><rect x="13" y="24.700" width="1.300" height="1.100" fill="#8a98aa"/><path d="M4.500 9.5l6-0.800 0-0.500 6-0.900 0-0.500 8-1.400" fill="none" stroke="#e8e000" stroke-width="1.100"/><path d="M4.500 11.8l6-0.800 0-0.500 6-0.900 0-0.500 8-1.400" fill="none" stroke="#00e8e8" stroke-width="1.100"/><path d="M4.500 14l6-0.800 0-0.500 6-0.900 0-0.500 8-1.400" fill="none" stroke="#00d800" stroke-width="1.100"/><path d="M4.500 16.6l6-0.800 0-0.500 6-0.900 0-0.500 8-1.400" fill="none" stroke="#ff00e0" stroke-width="1.100"/><path d="M4.500 18.8l6-0.800 0-0.500 6-0.900 0-0.500 8-1.400" fill="none" stroke="#ff0000" stroke-width="1.100"/><path d="M4.500 21l6-0.800 0-0.500 6-0.900 0-0.500 8-1.400" fill="none" stroke="#0000ff" stroke-width="1.100"/></svg><svg style="left:988px;top:53px;width:32px;height:32px" viewBox="0 0 32 32"><defs><linearGradient id="g73" x1="0" y1="0" x2="1" y2="0"><stop offset="0" stop-color="#a8b8cc"/><stop offset="0.350" stop-color="#5a6a7c"/><stop offset="1" stop-color="#2a323c"/></linearGradient><linearGradient id="g74" x1="0" y1="0" x2="1" y2="0.200"><stop offset="0" stop-color="#f0f3f7"/><stop offset="0.450" stop-color="#bccada"/><stop offset="1" stop-color="#6c8ab2"/></linearGradient><linearGradient id="g75" x1="0" y1="0" x2="0" y2="1"><stop offset="0" stop-color="#6a7480"/><stop offset="1" stop-color="#2c3238"/></linearGradient></defs><path d="M12.500 27.500h9l1.200 2.200h-11.400z" fill="#39424c"/><path d="M4 31.500q0-1.700 4-1.800h16q3.500 0.100 3.500 1.800z" fill="url(#g75)"/><path d="M26.800 0.800l3.500 0.600q1.200 0.300 1.200 1.500v22.600q0 1.200-1 1.700l-3.700 1.400z" fill="url(#g73)"/><path d="M3.200 6.200l23.800-5.600v28l-25.800-2.200q-1-0.200-0.900-1.200l1.600-17.500q0.200-1.200 1.300-1.500z" fill="url(#g74)" stroke="#3e4652" stroke-width="0.900"/><path d="M3.600 7.600l22.400-5.300v19.300l-24 1z" fill="#ffffff"/><rect x="2" y="24.300" width="3.300" height="1.400" fill="#5a6470"/><rect x="22" y="24.600" width="4" height="1.500" fill="#6a7888"/><rect x="13" y="24.700" width="1.300" height="1.100" fill="#8a98aa"/><path d="M5 12.500l3-1.500h3l3-1 3 0.300 3-1.300 3 0.800" fill="none" stroke="#0000ff" stroke-width="1.300"/><path d="M5 13.200l3-1.200h3l3-1.200 3 0.500 3-1 3 0.300" fill="none" stroke="#00c000" stroke-width="1.200"/><path d="M4.500 14l3-1 3-0.300 3-0.700 3-0.300 3-0.200 4-0.300" fill="none" stroke="#ff0000" stroke-width="1.400"/><path d="M5 21.500l2-1.700 2.500 0.200 2.500-2.500 2.200 0.500 2.500 2.300 2.500-0.800 2.300-1.500 3 1.700" fill="none" stroke="#ff00e0" stroke-width="1.200" stroke-linejoin="round"/></svg><div style="left:1026px;top:53px;width:1px;height:33px;background:#b4bcc9;"></div><div style="left:1027px;top:54px;width:1px;height:33px;background:#fbfcfe;"></div><svg style="left:1033px;top:53px;width:32px;height:32px" viewBox="0 0 32 32"><defs><linearGradient id="g76" x1="0" y1="0" x2="1" y2="0"><stop offset="0" stop-color="#a8b8cc"/><stop offset="0.350" stop-color="#5a6a7c"/><stop offset="1" stop-color="#2a323c"/></linearGradient><linearGradient id="g77" x1="0" y1="0" x2="1" y2="0.200"><stop offset="0" stop-color="#f0f3f7"/><stop offset="0.450" stop-color="#bccada"/><stop offset="1" stop-color="#6c8ab2"/></linearGradient><linearGradient id="g78" x1="0" y1="0" x2="0" y2="1"><stop offset="0" stop-color="#6a7480"/><stop offset="1" stop-color="#2c3238"/></linearGradient></defs><path d="M12.500 27.500h9l1.200 2.200h-11.400z" fill="#39424c"/><path d="M4 31.500q0-1.700 4-1.800h16q3.500 0.100 3.500 1.800z" fill="url(#g78)"/><path d="M26.800 0.800l3.500 0.600q1.200 0.300 1.200 1.500v22.600q0 1.200-1 1.700l-3.700 1.400z" fill="url(#g76)"/><path d="M3.200 6.200l23.800-5.600v28l-25.800-2.200q-1-0.200-0.900-1.200l1.600-17.500q0.200-1.200 1.300-1.500z" fill="url(#g77)" stroke="#3e4652" stroke-width="0.900"/><path d="M3.600 7.600l22.400-5.300v19.300l-24 1z" fill="#2a2a2a"/><rect x="2" y="24.300" width="3.300" height="1.400" fill="#5a6470"/><rect x="22" y="24.600" width="4" height="1.500" fill="#6a7888"/><rect x="13" y="24.700" width="1.300" height="1.100" fill="#8a98aa"/><path d="M4 11l6-1.200 0-0.500 6-1.200 0-0.600 8-2" fill="none" stroke="#e8e000" stroke-width="1.200"/><path d="M4 15l2-1 2 1 2-1.500 2 1 2-1.500 2 1 2-1.500 2 1 2-1.500 2 0.800" fill="none" stroke="#e86000" stroke-width="1"/><path d="M4 16l2-0.500 2 0.500 2-1 2 0.500 2-1 2 0.500 2-1 2 0.500 2-1 2 0.300" fill="none" stroke="#00c040" stroke-width="1"/><path d="M4 14.500l3-0.200 3 0.200 3-0.500 3 0.200 3-0.500 3 0.200 3-0.400" fill="none" stroke="#2060ff" stroke-width="0.800"/><path d="M4 19.500l11-1 0-0.500 10-1.200" fill="none" stroke="#ff00e0" stroke-width="1.200"/><path d="M4 21.500l21-1.300" fill="none" stroke="#8060ff" stroke-width="1"/></svg>
<!-- frame -->
<div style="left:0px;top:90px;width:1920px;height:950px;background:#fff;"></div><div style="left:0px;top:90px;width:1919px;height:2px;background:#a4a4a4;"></div><div style="left:1px;top:92px;width:1900px;height:2px;background:#868686;"></div><div style="left:0px;top:90px;width:1px;height:950px;background:#a4a4a4;"></div><div style="left:1px;top:92px;width:1px;height:948px;background:#868686;"></div><div style="left:1896px;top:94px;width:1px;height:925px;background:#6e6e6e;"></div><div style="left:1897px;top:92px;width:4px;height:930px;background:#868686;"></div><div style="left:1896px;top:384px;width:1px;height:633px;background:#909090;"></div><div style="left:1897px;top:384px;width:1px;height:635px;background:#6c6c6c;"></div><div style="left:1898px;top:384px;width:3px;height:638px;background:#a4a4a4;"></div><div style="left:1901px;top:91px;width:18px;height:1px;background:#7c7c7c;"></div><div style="left:1901px;top:92px;width:19px;height:2px;background:#fff;"></div><div style="left:1901px;top:94px;width:1px;height:946px;background:#fff;"></div><div style="left:1902px;top:94px;width:18px;height:946px;background:#f0f0f0;"></div><div style="left:1909px;top:109px;width:2px;height:869px;background:#808080;border-radius:1px;"></div><div style="left:2px;top:155px;width:1895px;height:1px;background:#a4a4a4;"></div><div style="left:2px;top:156px;width:1895px;height:3px;background:#868686;"></div><div style="left:2px;top:379px;width:1895px;height:1px;background:#a4a4a4;"></div><div style="left:2px;top:380px;width:1895px;height:4px;background:#868686;"></div><div style="left:2px;top:1017px;width:1896px;height:2px;background:#6e6e6e;"></div><div style="left:2px;top:1019px;width:1899px;height:3px;background:#b8b8b8;"></div><div style="left:1px;top:1022px;width:1919px;height:18px;background:#f0f0f0;"></div><div style="left:1px;top:1022px;width:1900px;height:1px;background:#fff;"></div><div style="left:19px;top:1030px;width:1824px;height:2px;background:#8a8a8a;border-radius:1px;"></div><div style="left:1306px;top:94px;width:1px;height:61px;background:#a4a4a4;"></div><div style="left:1307px;top:94px;width:1px;height:61px;background:#6c6c6c;"></div><div style="left:1618px;top:94px;width:1px;height:61px;background:#e0e0e0;"></div><div style="left:1743px;top:94px;width:1px;height:61px;background:#e0e0e0;"></div><div style="left:385px;top:384px;width:1px;height:633px;background:#909090;"></div><div style="left:386px;top:384px;width:1px;height:633px;background:#6c6c6c;"></div><div style="left:387px;top:384px;width:1px;height:633px;background:#909090;"></div>
<!-- topgroups -->
<div class="gb" style="left:5px;top:97px;width:1300px;height:57px;"><div class="cn"></div><div class="cn r"></div><div class="hd" style="height:17px"></div><div class="hl" style="top:17px"></div></div><div class="t" style="left:12.00px;top:101.19px;font-family:'DejaVu Sans','Liberation Sans',sans-serif;font-size:11px;line-height:14px;color:#3c3c46;font-weight:bold;transform:scaleX(0.9758);transform-origin:0 0;">View</div><div style="left:7px;top:120px;width:200px;height:23px;background:#fff;border-top:1px solid #8c8c8c;border-left:1px solid #8c8c8c;border-right:1px solid #fff;border-bottom:1px solid #fff;"></div><div style="left:8px;top:121px;width:198px;height:21px;border-top:1px solid #646464;border-left:1px solid #646464;border-right:1px solid #e3e3e3;border-bottom:1px solid #e3e3e3;"></div><div style="left:10px;top:124px;width:177px;height:16px;background:#0078d7;"></div><div class="t" style="left:11.00px;top:124.67px;font-family:'DejaVu Sans','Liberation Sans',sans-serif;font-size:12.5px;line-height:16px;color:#fff;transform:scaleX(1.0183);transform-origin:0 0;">Yellow saturation scale</div><div style="left:188px;top:123px;width:17px;height:18px;background:#f0f0f0;border-top:1px solid #fff;border-left:1px solid #fff;border-right:1px solid #696969;border-bottom:1px solid #696969;"></div><div style="left:189px;top:124px;width:15px;height:16px;border-right:1px solid #a0a0a0;border-bottom:1px solid #a0a0a0;"></div><svg style="left:193.0px;top:130.5px;width:7px;height:4px" viewBox="0 0 7 4"><path d="M0 0h7l-3.5 4z" fill="#000"/></svg><div style="left:216px;top:118px;width:1056px;height:28px;background:#f0f0f0;border-top:1px solid #c6c6c6;border-left:1px solid #c6c6c6;border-right:1px solid #fbfbfb;border-bottom:1px solid #fbfbfb;"></div><div class="t" style="left:218.00px;top:117.16px;font-family:'Liberation Sans',sans-serif;font-size:16px;line-height:21px;color:#000;font-weight:bold;transform:scaleX(1.0026);transform-origin:0 0;white-space:pre;">Color Space: HDTV Rec709 , White Point: D65, EOTF:  SDR, Power law (black compensation) w/gamma = 2.40, # of measures: 0 [20:07:02]</div><div style="left:1278px;top:120px;width:17px;height:12px;background:#f0f0f0;border-top:1px solid #fff;border-left:1px solid #fff;border-right:1px solid #696969;border-bottom:1px solid #696969;"></div><div style="left:1279px;top:121px;width:15px;height:10px;border-right:1px solid #a0a0a0;border-bottom:1px solid #a0a0a0;"></div><svg style="left:1283.0px;top:124.0px;width:6px;height:3px" viewBox="0 0 6 3"><path d="M0 3h6l-3.0-3z" fill="#000"/></svg><div style="left:1278px;top:133px;width:17px;height:12px;background:#f0f0f0;border-top:1px solid #fff;border-left:1px solid #fff;border-right:1px solid #696969;border-bottom:1px solid #696969;"></div><div style="left:1279px;top:134px;width:15px;height:10px;border-right:1px solid #a0a0a0;border-bottom:1px solid #a0a0a0;"></div><svg style="left:1283.0px;top:137.0px;width:6px;height:3px" viewBox="0 0 6 3"><path d="M0 0h6l-3.0 3z" fill="#000"/></svg><div class="gb" style="left:1311px;top:97px;width:306px;height:57px;"><div class="cn"></div><div class="cn r"></div><div class="hd" style="height:17px"></div><div class="hl" style="top:17px"></div></div><div class="t" style="left:1318.00px;top:101.19px;font-family:'DejaVu Sans','Liberation Sans',sans-serif;font-size:11px;line-height:14px;color:#3c3c46;font-weight:bold;transform:scaleX(1.0456);transform-origin:0 0;">Sensor</div><div style="left:1316px;top:117px;width:295px;height:14px;background:#f0f0f0;"></div><div class="t" style="left:1316.30px;top:116.67px;font-family:'DejaVu Sans','Liberation Sans',sans-serif;font-size:12.5px;line-height:16px;color:#000;transform:scaleX(0.9947);transform-origin:0 0;">Simulated sensor</div><div style="left:1317px;top:135px;width:67px;height:14px;background:#f0f0f0;"></div><div class="t" style="left:1318.00px;top:133.68px;font-family:'DejaVu Sans','Liberation Sans',sans-serif;font-size:12.5px;line-height:16px;color:#000;transform:scaleX(0.9886);transform-origin:0 0;">Adaptive</div><svg style="left:1423px;top:135px;width:14px;height:13px" viewBox="0 0 14 13"><path d="M1.500 1l11 5.500-11 5.500z" fill="#84d238" stroke="#5fae20" stroke-width="1" stroke-linejoin="round"/></svg><svg style="left:1588px;top:132px;width:18px;height:18px" viewBox="0 0 18 18"><defs><linearGradient id="g79" x1="0" y1="0" x2="0.600" y2="1"><stop offset="0" stop-color="#f4f9ff"/><stop offset="0.500" stop-color="#cfe6fc"/><stop offset="1" stop-color="#8cc8fa"/></linearGradient></defs><path d="M1.500 2.700l10-1.300 0.700 14.300-10.300 1.800z" fill="#20304c" opacity="0.450"/><path d="M1.200 2.400l9-1.200 0.500 13.200-9 1.700z" fill="url(#g79)" stroke="#1c5cc4" stroke-width="1.900" stroke-linejoin="round"/><path d="M3.600 8.800l2.400 3.200 2.900-7" fill="none" stroke="#d8b448" stroke-width="1.500" stroke-linejoin="round"/><path d="M9.300 10.300l6-2.400" stroke="#203858" stroke-width="2.200" opacity="0.500" transform="translate(0.400 0.700)"/><path d="M9.300 10.300l6-2.400" stroke="#7cbcf4" stroke-width="1.900"/><circle cx="15.600" cy="7.400" r="1.300" fill="#d04828"/></svg><div class="gb" style="left:1621px;top:97px;width:120px;height:57px;"><div class="cn"></div><div class="cn r"></div><div class="hd" style="height:17px"></div><div class="hl" style="top:17px"></div></div><div class="t" style="left:1628.00px;top:101.19px;font-family:'DejaVu Sans','Liberation Sans',sans-serif;font-size:11px;line-height:14px;color:#3c3c46;font-weight:bold;transform:scaleX(1.0457);transform-origin:0 0;">Generator</div><div style="left:1623px;top:117px;width:100px;height:14px;background:#f0f0f0;"></div><div class="t" style="left:1624.00px;top:116.67px;font-family:'DejaVu Sans','Liberation Sans',sans-serif;font-size:12.5px;line-height:16px;color:#000;transform:scaleX(1.0024);transform-origin:0 0;">Raspberry Pi</div><svg style="left:1718px;top:134px;width:18px;height:18px" viewBox="0 0 18 18"><defs><linearGradient id="g80" x1="0" y1="0" x2="0.600" y2="1"><stop offset="0" stop-color="#f4f9ff"/><stop offset="0.500" stop-color="#cfe6fc"/><stop offset="1" stop-color="#8cc8fa"/></linearGradient></defs><path d="M1.500 2.700l10-1.300 0.700 14.300-10.300 1.800z" fill="#20304c" opacity="0.450"/><path d="M1.200 2.400l9-1.200 0.500 13.200-9 1.700z" fill="url(#g80)" stroke="#1c5cc4" stroke-width="1.900" stroke-linejoin="round"/><path d="M3.600 8.800l2.400 3.200 2.900-7" fill="none" stroke="#d8b448" stroke-width="1.500" stroke-linejoin="round"/><path d="M9.300 10.300l6-2.400" stroke="#203858" stroke-width="2.200" opacity="0.500" transform="translate(0.400 0.700)"/><path d="M9.300 10.300l6-2.400" stroke="#7cbcf4" stroke-width="1.900"/><circle cx="15.600" cy="7.400" r="1.300" fill="#d04828"/></svg><div class="gb" style="left:1745px;top:97px;width:150px;height:57px;"><div class="cn"></div><div class="cn r"></div><div class="hd" style="height:17px"></div><div class="hl" style="top:17px"></div></div><div class="t" style="left:1752.50px;top:101.19px;font-family:'DejaVu Sans','Liberation Sans',sans-serif;font-size:11px;line-height:14px;color:#3c3c46;font-weight:bold;transform:scaleX(1.0536);transform-origin:0 0;">Parameters</div><div style="left:1752px;top:118px;width:98px;height:15px;background:#f0f0f0;"></div><div style="left:1754px;top:119px;width:13px;height:13px;background:#fff;border-top:1px solid #8c8c8c;border-left:1px solid #8c8c8c;border-right:1px solid #fff;border-bottom:1px solid #fff;"></div><div style="left:1755px;top:120px;width:11px;height:11px;border-top:1px solid #646464;border-left:1px solid #646464;border-right:1px solid #e3e3e3;border-bottom:1px solid #e3e3e3;"></div><div class="t" style="left:1773.00px;top:117.67px;font-family:'DejaVu Sans','Liberation Sans',sans-serif;font-size:12.5px;line-height:16px;color:#000;transform:scaleX(0.9928);transform-origin:0 0;">Reference</div><div style="left:1752px;top:135px;width:132px;height:15px;background:#f0f0f0;"></div><div style="left:1754px;top:136px;width:13px;height:13px;background:#f0f0f0;border-top:1px solid #8c8c8c;border-left:1px solid #8c8c8c;border-right:1px solid #fff;border-bottom:1px solid #fff;"></div><div style="left:1755px;top:137px;width:11px;height:11px;border-top:1px solid #646464;border-left:1px solid #646464;border-right:1px solid #e3e3e3;border-bottom:1px solid #e3e3e3;"></div><div class="t" style="left:1774.75px;top:135.68px;font-family:'DejaVu Sans','Liberation Sans',sans-serif;font-size:12.5px;line-height:16px;color:#fff;transform:scaleX(0.9824);transform-origin:0 0;">XYZ Adjustment</div><div class="t" style="left:1773.75px;top:134.68px;font-family:'DejaVu Sans','Liberation Sans',sans-serif;font-size:12.5px;line-height:16px;color:#a2a2a2;transform:scaleX(0.9824);transform-origin:0 0;">XYZ Adjustment</div>
<!-- tablegroup -->
<div class="gb" style="left:5px;top:162px;width:1804px;height:216px;"><div class="cn"></div><div class="cn r"></div><div class="hd" style="height:14px"></div><div class="hl" style="top:14px"></div></div><div style="left:6px;top:163px;width:1790px;height:13px;overflow:hidden;"><div class="t" style="left:8.20px;top:1.74px;font-family:'DejaVu Sans','Liberation Sans',sans-serif;font-size:10px;line-height:13px;color:#3c3c46;font-weight:bold;transform:scaleX(0.8892);transform-origin:0 0;">( Average dE: 5.01 [0.10,2.52,3.77] max: 9.00 [CIE2000] )</div></div><div style="left:6px;top:179px;width:1802px;height:198px;border:1px solid #f00000;border-top:none;"></div><div style="left:1790px;top:179px;width:18px;height:1px;background:#f00000;"></div><div style="left:6px;top:179px;width:2px;height:1px;background:#f00000;"></div><div style="left:10px;top:163px;width:1px;height:1px;background:#f00000;"></div><div style="left:6px;top:167px;width:1px;height:1px;background:#f00000;"></div><svg style="left:1801px;top:162px;width:8px;height:18px" viewBox="0 0 8 18"><path d="M0.500 1.500q6 0 6 6v10.500" fill="none" stroke="#f00000" stroke-width="1"/></svg><div style="left:8px;top:176px;width:1782px;height:198px;overflow:hidden;"><div style="left:0px;top:0px;width:1782px;height:198px;background:#f0f0f0;"></div><div style="left:0px;top:0px;width:1782px;height:1px;background:#c4c4c4;"></div><div style="left:0px;top:1px;width:1782px;height:1px;background:#6a6a6a;"></div><div style="left:0px;top:0px;width:1px;height:198px;background:#b0b0b0;"></div><div style="left:1px;top:1px;width:1px;height:197px;background:#6a6a6a;"></div><div style="left:2px;top:2px;width:1780px;height:1px;background:#fff;"></div><div style="left:2px;top:3px;width:53px;height:21px;background:#f0f0f0;border-top:1px solid #fff;border-left:1px solid #fff;"></div><div class="t" style="left:14.00px;top:5.84px;font-family:'Liberation Sans',sans-serif;font-size:12px;line-height:16px;color:#000;font-weight:bold;transform:scaleX(0.9484);transform-origin:0 0;">% Sat</div><div style="left:57px;top:3px;width:153px;height:21px;background:#f0f0f0;border-top:1px solid rgba(255,255,255,.7);border-left:1px solid rgba(255,255,255,.7);"></div><div class="t" style="left:130.50px;top:5.84px;font-family:'Liberation Sans',sans-serif;font-size:12px;line-height:16px;color:#000;font-weight:bold;transform:scaleX(0.8972);transform-origin:0 0;">0</div><div style="left:212px;top:3px;width:153px;height:21px;background:#f0f0d6;border-top:1px solid rgba(255,255,255,.7);border-left:1px solid rgba(255,255,255,.7);"></div><div class="t" style="left:282.00px;top:5.84px;font-family:'Liberation Sans',sans-serif;font-size:12px;line-height:16px;color:#000;font-weight:bold;transform:scaleX(0.9731);transform-origin:0 0;">10</div><div style="left:367px;top:3px;width:153px;height:21px;background:#f0f0bd;border-top:1px solid rgba(255,255,255,.7);border-left:1px solid rgba(255,255,255,.7);"></div><div class="t" style="left:437.00px;top:5.84px;font-family:'Liberation Sans',sans-serif;font-size:12px;line-height:16px;color:#000;font-weight:bold;transform:scaleX(0.9731);transform-origin:0 0;">20</div><div style="left:522px;top:3px;width:153px;height:21px;background:#f0f0a4;border-top:1px solid rgba(255,255,255,.7);border-left:1px solid rgba(255,255,255,.7);"></div><div class="t" style="left:592.00px;top:5.84px;font-family:'Liberation Sans',sans-serif;font-size:12px;line-height:16px;color:#000;font-weight:bold;transform:scaleX(0.9731);transform-origin:0 0;">30</div><div style="left:677px;top:3px;width:153px;height:21px;background:#f0f08c;border-top:1px solid rgba(255,255,255,.7);border-left:1px solid rgba(255,255,255,.7);"></div><div class="t" style="left:747.00px;top:5.84px;font-family:'Liberation Sans',sans-serif;font-size:12px;line-height:16px;color:#000;font-weight:bold;transform:scaleX(0.9731);transform-origin:0 0;">40</div><div style="left:832px;top:3px;width:153px;height:21px;background:#f0f074;border-top:1px solid rgba(255,255,255,.7);border-left:1px solid rgba(255,255,255,.7);"></div><div class="t" style="left:902.00px;top:5.84px;font-family:'Liberation Sans',sans-serif;font-size:12px;line-height:16px;color:#000;font-weight:bold;transform:scaleX(0.9731);transform-origin:0 0;">50</div><div style="left:987px;top:3px;width:153px;height:21px;background:#f0f05d;border-top:1px solid rgba(255,255,255,.7);border-left:1px solid rgba(255,255,255,.7);"></div><div class="t" style="left:1057.00px;top:5.84px;font-family:'Liberation Sans',sans-serif;font-size:12px;line-height:16px;color:#000;font-weight:bold;transform:scaleX(0.9731);transform-origin:0 0;">60</div><div style="left:1142px;top:3px;width:152px;height:21px;background:#f0f047;border-top:1px solid rgba(255,255,255,.7);border-left:1px solid rgba(255,255,255,.7);"></div><div class="t" style="left:1211.50px;top:5.84px;font-family:'Liberation Sans',sans-serif;font-size:12px;line-height:16px;color:#000;font-weight:bold;transform:scaleX(0.9731);transform-origin:0 0;">70</div><div style="left:1296px;top:3px;width:152px;height:21px;background:#f0f033;border-top:1px solid rgba(255,255,255,.7);border-left:1px solid rgba(255,255,255,.7);"></div><div class="t" style="left:1365.50px;top:5.84px;font-family:'Liberation Sans',sans-serif;font-size:12px;line-height:16px;color:#000;font-weight:bold;transform:scaleX(0.9731);transform-origin:0 0;">80</div><div style="left:1450px;top:3px;width:155px;height:21px;background:#f0f01f;border-top:1px solid rgba(255,255,255,.7);border-left:1px solid rgba(255,255,255,.7);"></div><div class="t" style="left:1521.00px;top:5.84px;font-family:'Liberation Sans',sans-serif;font-size:12px;line-height:16px;color:#000;font-weight:bold;transform:scaleX(0.9731);transform-origin:0 0;">90</div><div style="left:1607px;top:3px;width:155px;height:21px;background:#f0f010;border-top:1px solid rgba(255,255,255,.7);border-left:1px solid rgba(255,255,255,.7);"></div><div class="t" style="left:1674.50px;top:5.84px;font-family:'Liberation Sans',sans-serif;font-size:12px;line-height:16px;color:#000;font-weight:bold;transform:scaleX(0.9984);transform-origin:0 0;">100</div><div style="left:2px;top:24px;width:1760px;height:1px;background:#6e6e6e;"></div><div style="left:55px;top:3px;width:1px;height:22px;background:#6e6e6e;"></div><div style="left:210px;top:3px;width:1px;height:22px;background:#6e6e6e;"></div><div style="left:365px;top:3px;width:1px;height:22px;background:#6e6e6e;"></div><div style="left:520px;top:3px;width:1px;height:22px;background:#6e6e6e;"></div><div style="left:675px;top:3px;width:1px;height:22px;background:#6e6e6e;"></div><div style="left:830px;top:3px;width:1px;height:22px;background:#6e6e6e;"></div><div style="left:985px;top:3px;width:1px;height:22px;background:#6e6e6e;"></div><div style="left:1140px;top:3px;width:1px;height:22px;background:#6e6e6e;"></div><div style="left:1294px;top:3px;width:1px;height:22px;background:#6e6e6e;"></div><div style="left:1448px;top:3px;width:1px;height:22px;background:#6e6e6e;"></div><div style="left:1605px;top:3px;width:1px;height:22px;background:#6e6e6e;"></div><div style="left:1762px;top:3px;width:1px;height:22px;background:#6e6e6e;"></div><div style="left:2px;top:25px;width:53px;height:24px;background:#f0f0f0;border-top:1px solid #fff;border-left:1px solid #fff;"></div><div style="left:2px;top:49px;width:53px;height:1px;background:#6e6e6e;"></div><div class="t" style="left:25.50px;top:29.34px;font-family:'Liberation Sans',sans-serif;font-size:12px;line-height:16px;color:#000;font-weight:bold;transform:scaleX(1.0467);transform-origin:0 0;">x</div><div style="left:57px;top:25px;width:1705px;height:24px;background:#fff;"></div><div style="left:57px;top:49px;width:1705px;height:1px;background:#c4c4c4;"></div><div class="t" style="left:176.50px;top:29.84px;font-family:'Liberation Sans',sans-serif;font-size:12px;line-height:16px;color:#000;transform:scaleX(0.8719);transform-origin:0 0;">0.3049</div><div class="t" style="left:331.50px;top:29.84px;font-family:'Liberation Sans',sans-serif;font-size:12px;line-height:16px;color:#000;transform:scaleX(0.8719);transform-origin:0 0;">0.3165</div><div class="t" style="left:486.50px;top:29.84px;font-family:'Liberation Sans',sans-serif;font-size:12px;line-height:16px;color:#000;transform:scaleX(0.8719);transform-origin:0 0;">0.3269</div><div class="t" style="left:641.50px;top:29.84px;font-family:'Liberation Sans',sans-serif;font-size:12px;line-height:16px;color:#000;transform:scaleX(0.8719);transform-origin:0 0;">0.3387</div><div class="t" style="left:796.50px;top:29.84px;font-family:'Liberation Sans',sans-serif;font-size:12px;line-height:16px;color:#000;transform:scaleX(0.8719);transform-origin:0 0;">0.3491</div><div class="t" style="left:951.50px;top:29.84px;font-family:'Liberation Sans',sans-serif;font-size:12px;line-height:16px;color:#000;transform:scaleX(0.8719);transform-origin:0 0;">0.3610</div><div class="t" style="left:1106.50px;top:29.84px;font-family:'Liberation Sans',sans-serif;font-size:12px;line-height:16px;color:#000;transform:scaleX(0.8719);transform-origin:0 0;">0.3709</div><div class="t" style="left:1260.50px;top:29.84px;font-family:'Liberation Sans',sans-serif;font-size:12px;line-height:16px;color:#000;transform:scaleX(0.8719);transform-origin:0 0;">0.3807</div><div class="t" style="left:1414.50px;top:29.84px;font-family:'Liberation Sans',sans-serif;font-size:12px;line-height:16px;color:#000;transform:scaleX(0.8719);transform-origin:0 0;">0.3914</div><div class="t" style="left:1571.50px;top:29.84px;font-family:'Liberation Sans',sans-serif;font-size:12px;line-height:16px;color:#000;transform:scaleX(0.8719);transform-origin:0 0;">0.4010</div><div class="t" style="left:1728.50px;top:29.84px;font-family:'Liberation Sans',sans-serif;font-size:12px;line-height:16px;color:#000;transform:scaleX(0.8719);transform-origin:0 0;">0.4103</div><div style="left:2px;top:50px;width:53px;height:24px;background:#f0f0f0;border-top:1px solid #fff;border-left:1px solid #fff;"></div><div style="left:2px;top:74px;width:53px;height:1px;background:#6e6e6e;"></div><div class="t" style="left:25.50px;top:54.34px;font-family:'Liberation Sans',sans-serif;font-size:12px;line-height:16px;color:#000;font-weight:bold;transform:scaleX(1.0467);transform-origin:0 0;">y</div><div style="left:57px;top:50px;width:1705px;height:24px;background:#fff;"></div><div style="left:57px;top:74px;width:1705px;height:1px;background:#c4c4c4;"></div><div class="t" style="left:176.50px;top:54.84px;font-family:'Liberation Sans',sans-serif;font-size:12px;line-height:16px;color:#000;transform:scaleX(0.8719);transform-origin:0 0;">0.3361</div><div class="t" style="left:331.50px;top:54.84px;font-family:'Liberation Sans',sans-serif;font-size:12px;line-height:16px;color:#000;transform:scaleX(0.8719);transform-origin:0 0;">0.3551</div><div class="t" style="left:486.50px;top:54.84px;font-family:'Liberation Sans',sans-serif;font-size:12px;line-height:16px;color:#000;transform:scaleX(0.8719);transform-origin:0 0;">0.3760</div><div class="t" style="left:641.50px;top:54.84px;font-family:'Liberation Sans',sans-serif;font-size:12px;line-height:16px;color:#000;transform:scaleX(0.8719);transform-origin:0 0;">0.3965</div><div class="t" style="left:796.50px;top:54.84px;font-family:'Liberation Sans',sans-serif;font-size:12px;line-height:16px;color:#000;transform:scaleX(0.8719);transform-origin:0 0;">0.4129</div><div class="t" style="left:951.50px;top:54.84px;font-family:'Liberation Sans',sans-serif;font-size:12px;line-height:16px;color:#000;transform:scaleX(0.8719);transform-origin:0 0;">0.4321</div><div class="t" style="left:1106.50px;top:54.84px;font-family:'Liberation Sans',sans-serif;font-size:12px;line-height:16px;color:#000;transform:scaleX(0.8719);transform-origin:0 0;">0.4533</div><div class="t" style="left:1260.50px;top:54.84px;font-family:'Liberation Sans',sans-serif;font-size:12px;line-height:16px;color:#000;transform:scaleX(0.8719);transform-origin:0 0;">0.4706</div><div class="t" style="left:1414.50px;top:54.84px;font-family:'Liberation Sans',sans-serif;font-size:12px;line-height:16px;color:#000;transform:scaleX(0.8719);transform-origin:0 0;">0.4897</div><div class="t" style="left:1571.50px;top:54.84px;font-family:'Liberation Sans',sans-serif;font-size:12px;line-height:16px;color:#000;transform:scaleX(0.8719);transform-origin:0 0;">0.5069</div><div class="t" style="left:1728.50px;top:54.84px;font-family:'Liberation Sans',sans-serif;font-size:12px;line-height:16px;color:#000;transform:scaleX(0.8719);transform-origin:0 0;">0.5219</div><div style="left:2px;top:75px;width:53px;height:24px;background:#f0f0f0;border-top:1px solid #fff;border-left:1px solid #fff;"></div><div style="left:2px;top:99px;width:53px;height:1px;background:#6e6e6e;"></div><div class="t" style="left:25.00px;top:79.34px;font-family:'Liberation Sans',sans-serif;font-size:12px;line-height:16px;color:#000;font-weight:bold;transform:scaleX(0.9981);transform-origin:0 0;">Y</div><div style="left:57px;top:75px;width:1705px;height:24px;background:#fff;"></div><div style="left:57px;top:99px;width:1705px;height:1px;background:#c4c4c4;"></div><div class="t" style="left:170.50px;top:79.84px;font-family:'Liberation Sans',sans-serif;font-size:12px;line-height:16px;color:#000;transform:scaleX(0.8758);transform-origin:0 0;">304.878</div><div class="t" style="left:325.50px;top:79.84px;font-family:'Liberation Sans',sans-serif;font-size:12px;line-height:16px;color:#000;transform:scaleX(0.8758);transform-origin:0 0;">303.419</div><div class="t" style="left:480.50px;top:79.84px;font-family:'Liberation Sans',sans-serif;font-size:12px;line-height:16px;color:#000;transform:scaleX(0.8758);transform-origin:0 0;">304.205</div><div class="t" style="left:635.50px;top:79.84px;font-family:'Liberation Sans',sans-serif;font-size:12px;line-height:16px;color:#000;transform:scaleX(0.8758);transform-origin:0 0;">305.853</div><div class="t" style="left:790.50px;top:79.84px;font-family:'Liberation Sans',sans-serif;font-size:12px;line-height:16px;color:#000;transform:scaleX(0.8758);transform-origin:0 0;">302.420</div><div class="t" style="left:945.50px;top:79.84px;font-family:'Liberation Sans',sans-serif;font-size:12px;line-height:16px;color:#000;transform:scaleX(0.8758);transform-origin:0 0;">300.708</div><div class="t" style="left:1100.50px;top:79.84px;font-family:'Liberation Sans',sans-serif;font-size:12px;line-height:16px;color:#000;transform:scaleX(0.8758);transform-origin:0 0;">303.502</div><div class="t" style="left:1254.50px;top:79.84px;font-family:'Liberation Sans',sans-serif;font-size:12px;line-height:16px;color:#000;transform:scaleX(0.8758);transform-origin:0 0;">303.653</div><div class="t" style="left:1408.50px;top:79.84px;font-family:'Liberation Sans',sans-serif;font-size:12px;line-height:16px;color:#000;transform:scaleX(0.8758);transform-origin:0 0;">307.506</div><div class="t" style="left:1565.50px;top:79.84px;font-family:'Liberation Sans',sans-serif;font-size:12px;line-height:16px;color:#000;transform:scaleX(0.8758);transform-origin:0 0;">308.628</div><div class="t" style="left:1722.50px;top:79.84px;font-family:'Liberation Sans',sans-serif;font-size:12px;line-height:16px;color:#000;transform:scaleX(0.8758);transform-origin:0 0;">302.767</div><div style="left:2px;top:100px;width:53px;height:24px;background:#f0f0f0;border-top:1px solid #fff;border-left:1px solid #fff;"></div><div style="left:2px;top:124px;width:53px;height:1px;background:#6e6e6e;"></div><div class="t" style="left:10.00px;top:104.34px;font-family:'Liberation Sans',sans-serif;font-size:12px;line-height:16px;color:#000;font-weight:bold;transform:scaleX(0.9339);transform-origin:0 0;">Delta E</div><div style="left:57px;top:100px;width:1705px;height:24px;background:#ffaaaa;"></div><div style="left:57px;top:124px;width:1705px;height:1px;background:#c4c4c4;"></div><div class="t" style="left:192.50px;top:104.84px;font-family:'Liberation Sans',sans-serif;font-size:12px;line-height:16px;color:#000;font-weight:bold;transform:scaleX(0.9588);transform-origin:0 0;">9.0</div><div class="t" style="left:347.50px;top:104.84px;font-family:'Liberation Sans',sans-serif;font-size:12px;line-height:16px;color:#000;font-weight:bold;transform:scaleX(0.9588);transform-origin:0 0;">7.1</div><div class="t" style="left:502.50px;top:104.84px;font-family:'Liberation Sans',sans-serif;font-size:12px;line-height:16px;color:#000;font-weight:bold;transform:scaleX(0.9588);transform-origin:0 0;">6.3</div><div class="t" style="left:657.50px;top:104.84px;font-family:'Liberation Sans',sans-serif;font-size:12px;line-height:16px;color:#000;font-weight:bold;transform:scaleX(0.9588);transform-origin:0 0;">5.2</div><div class="t" style="left:812.50px;top:104.84px;font-family:'Liberation Sans',sans-serif;font-size:12px;line-height:16px;color:#000;font-weight:bold;transform:scaleX(0.9588);transform-origin:0 0;">4.4</div><div class="t" style="left:967.50px;top:104.84px;font-family:'Liberation Sans',sans-serif;font-size:12px;line-height:16px;color:#000;font-weight:bold;transform:scaleX(0.9588);transform-origin:0 0;">3.9</div><div class="t" style="left:1122.50px;top:104.84px;font-family:'Liberation Sans',sans-serif;font-size:12px;line-height:16px;color:#000;font-weight:bold;transform:scaleX(0.9588);transform-origin:0 0;">4.2</div><div class="t" style="left:1276.50px;top:104.84px;font-family:'Liberation Sans',sans-serif;font-size:12px;line-height:16px;color:#000;font-weight:bold;transform:scaleX(0.9588);transform-origin:0 0;">4.0</div><div class="t" style="left:1430.50px;top:104.84px;font-family:'Liberation Sans',sans-serif;font-size:12px;line-height:16px;color:#000;font-weight:bold;transform:scaleX(0.9588);transform-origin:0 0;">3.8</div><div class="t" style="left:1587.50px;top:104.84px;font-family:'Liberation Sans',sans-serif;font-size:12px;line-height:16px;color:#000;font-weight:bold;transform:scaleX(0.9588);transform-origin:0 0;">3.7</div><div class="t" style="left:1744.50px;top:104.84px;font-family:'Liberation Sans',sans-serif;font-size:12px;line-height:16px;color:#000;font-weight:bold;transform:scaleX(0.9588);transform-origin:0 0;">3.3</div><div style="left:2px;top:125px;width:53px;height:24px;background:#f0f0f0;border-top:1px solid #fff;border-left:1px solid #fff;"></div><div style="left:2px;top:149px;width:53px;height:1px;background:#6e6e6e;"></div><div class="t" style="left:7.50px;top:129.34px;font-family:'Liberation Sans',sans-serif;font-size:12px;line-height:16px;color:#000;font-weight:bold;transform:scaleX(0.9619);transform-origin:0 0;">delta xy</div><div style="left:57px;top:125px;width:1705px;height:24px;background:#f0f0f0;"></div><div style="left:57px;top:149px;width:1705px;height:1px;background:#c4c4c4;"></div><div class="t" style="left:176.50px;top:129.84px;font-family:'Liberation Sans',sans-serif;font-size:12px;line-height:16px;color:#000;transform:scaleX(0.8719);transform-origin:0 0;">0.0105</div><div class="t" style="left:331.50px;top:129.84px;font-family:'Liberation Sans',sans-serif;font-size:12px;line-height:16px;color:#000;transform:scaleX(0.8719);transform-origin:0 0;">0.0104</div><div class="t" style="left:486.50px;top:129.84px;font-family:'Liberation Sans',sans-serif;font-size:12px;line-height:16px;color:#000;transform:scaleX(0.8719);transform-origin:0 0;">0.0126</div><div class="t" style="left:641.50px;top:129.84px;font-family:'Liberation Sans',sans-serif;font-size:12px;line-height:16px;color:#000;transform:scaleX(0.8719);transform-origin:0 0;">0.0137</div><div class="t" style="left:796.50px;top:129.84px;font-family:'Liberation Sans',sans-serif;font-size:12px;line-height:16px;color:#000;transform:scaleX(0.8719);transform-origin:0 0;">0.0126</div><div class="t" style="left:951.50px;top:129.84px;font-family:'Liberation Sans',sans-serif;font-size:12px;line-height:16px;color:#000;transform:scaleX(0.8719);transform-origin:0 0;">0.0126</div><div class="t" style="left:1106.50px;top:129.84px;font-family:'Liberation Sans',sans-serif;font-size:12px;line-height:16px;color:#000;transform:scaleX(0.8719);transform-origin:0 0;">0.0159</div><div class="t" style="left:1260.50px;top:129.84px;font-family:'Liberation Sans',sans-serif;font-size:12px;line-height:16px;color:#000;transform:scaleX(0.8719);transform-origin:0 0;">0.0163</div><div class="t" style="left:1414.50px;top:129.84px;font-family:'Liberation Sans',sans-serif;font-size:12px;line-height:16px;color:#000;transform:scaleX(0.8719);transform-origin:0 0;">0.0174</div><div class="t" style="left:1571.50px;top:129.84px;font-family:'Liberation Sans',sans-serif;font-size:12px;line-height:16px;color:#000;transform:scaleX(0.8719);transform-origin:0 0;">0.0186</div><div class="t" style="left:1728.50px;top:129.84px;font-family:'Liberation Sans',sans-serif;font-size:12px;line-height:16px;color:#000;transform:scaleX(0.8719);transform-origin:0 0;">0.0190</div><div style="left:2px;top:150px;width:53px;height:24px;background:#f0f0f0;border-top:1px solid #fff;border-left:1px solid #fff;"></div><div style="left:2px;top:174px;width:53px;height:1px;background:#6e6e6e;"></div><div class="t" style="left:11.00px;top:154.34px;font-family:'Liberation Sans',sans-serif;font-size:12px;line-height:16px;color:#000;font-weight:bold;transform:scaleX(0.9309);transform-origin:0 0;">delta L</div><div style="left:57px;top:150px;width:1705px;height:24px;background:#e0e0e0;"></div><div style="left:57px;top:174px;width:1705px;height:1px;background:#c4c4c4;"></div><div class="t" style="left:173.50px;top:154.84px;font-family:'Liberation Sans',sans-serif;font-size:12px;line-height:16px;color:#000;transform:scaleX(0.9283);transform-origin:0 0;">+0.2 %</div><div class="t" style="left:331.50px;top:154.84px;font-family:'Liberation Sans',sans-serif;font-size:12px;line-height:16px;color:#000;transform:scaleX(0.9225);transform-origin:0 0;">-0.2 %</div><div class="t" style="left:511.50px;top:154.84px;font-family:'Liberation Sans',sans-serif;font-size:12px;line-height:16px;color:#000;transform:scaleX(0.9978);transform-origin:0 0;">=</div><div class="t" style="left:638.50px;top:154.84px;font-family:'Liberation Sans',sans-serif;font-size:12px;line-height:16px;color:#000;transform:scaleX(0.9283);transform-origin:0 0;">+0.4 %</div><div class="t" style="left:821.50px;top:154.84px;font-family:'Liberation Sans',sans-serif;font-size:12px;line-height:16px;color:#000;transform:scaleX(0.9978);transform-origin:0 0;">=</div><div class="t" style="left:951.50px;top:154.84px;font-family:'Liberation Sans',sans-serif;font-size:12px;line-height:16px;color:#000;transform:scaleX(0.9225);transform-origin:0 0;">-0.8 %</div><div class="t" style="left:1106.50px;top:154.84px;font-family:'Liberation Sans',sans-serif;font-size:12px;line-height:16px;color:#000;transform:scaleX(0.9225);transform-origin:0 0;">-0.4 %</div><div class="t" style="left:1257.50px;top:154.84px;font-family:'Liberation Sans',sans-serif;font-size:12px;line-height:16px;color:#000;transform:scaleX(0.9283);transform-origin:0 0;">+0.3 %</div><div class="t" style="left:1411.50px;top:154.84px;font-family:'Liberation Sans',sans-serif;font-size:12px;line-height:16px;color:#000;transform:scaleX(0.9283);transform-origin:0 0;">+1.0 %</div><div class="t" style="left:1568.50px;top:154.84px;font-family:'Liberation Sans',sans-serif;font-size:12px;line-height:16px;color:#000;transform:scaleX(0.9283);transform-origin:0 0;">+0.7 %</div><div class="t" style="left:1728.50px;top:154.84px;font-family:'Liberation Sans',sans-serif;font-size:12px;line-height:16px;color:#000;transform:scaleX(0.9225);transform-origin:0 0;">-0.8 %</div><div style="left:2px;top:175px;width:53px;height:4px;background:#f0f0f0;border-left:1px solid #fff;border-top:1px solid #fff;"></div><div style="left:57px;top:175px;width:1705px;height:4px;background:#f0f0f0;"></div><div style="left:55px;top:25px;width:1px;height:154px;background:#6e6e6e;"></div><div style="left:56px;top:25px;width:1px;height:154px;background:#f8f8f8;"></div><div style="left:210px;top:25px;width:1px;height:154px;background:#c4c4c4;"></div><div style="left:365px;top:25px;width:1px;height:154px;background:#c4c4c4;"></div><div style="left:520px;top:25px;width:1px;height:154px;background:#c4c4c4;"></div><div style="left:675px;top:25px;width:1px;height:154px;background:#c4c4c4;"></div><div style="left:830px;top:25px;width:1px;height:154px;background:#c4c4c4;"></div><div style="left:985px;top:25px;width:1px;height:154px;background:#c4c4c4;"></div><div style="left:1140px;top:25px;width:1px;height:154px;background:#c4c4c4;"></div><div style="left:1294px;top:25px;width:1px;height:154px;background:#c4c4c4;"></div><div style="left:1448px;top:25px;width:1px;height:154px;background:#c4c4c4;"></div><div style="left:1605px;top:25px;width:1px;height:154px;background:#c4c4c4;"></div><div style="left:1762px;top:25px;width:1px;height:154px;background:#c4c4c4;"></div><div style="left:1763px;top:3px;width:18px;height:176px;background:#f0f0f0;"></div><div style="left:1771px;top:19px;width:2px;height:141px;background:#8a8a8a;border-radius:1px;"></div><div style="left:2px;top:179px;width:1780px;height:19px;background:#f0f0f0;"></div><svg style="left:6px;top:183px;width:8px;height:10px" viewBox="0 0 8 10"><path d="M7 0.500v9l-6.500-4.500z" fill="#a6a6a6"/></svg><svg style="left:1752px;top:183px;width:8px;height:10px" viewBox="0 0 8 10"><path d="M0.500 0.500v9l6.500-4.500z" fill="#a6a6a6"/></svg></div>
<!-- displaygroup -->
<div style="left:1809px;top:159px;width:87px;height:224px;background:#fff;"></div><div style="left:1810px;top:159px;width:1px;height:224px;background:#a4a4a4;"></div><div style="left:1811px;top:159px;width:1px;height:224px;background:#6c6c6c;"></div><div style="left:1812px;top:262px;width:83px;height:1px;background:#a4a4a4;"></div><div style="left:1812px;top:263px;width:83px;height:1px;background:#6c6c6c;"></div><div style="left:1812px;top:264px;width:83px;height:90px;background:#ebebeb;border-top:1px solid #fff;border-left:1px solid #fff;"></div><div style="left:1813px;top:265px;width:1px;height:88px;background:#f4f4f4;"></div><div style="left:1813px;top:293px;width:82px;height:1px;background:#dedede;"></div><div style="left:1813px;top:294px;width:82px;height:1px;background:#fff;"></div><div style="left:1813px;top:323px;width:82px;height:1px;background:#dedede;"></div><div style="left:1813px;top:324px;width:82px;height:1px;background:#fff;"></div><div style="left:1812px;top:353px;width:83px;height:1px;background:#c8c8c8;"></div><div style="left:1895px;top:262px;width:6px;height:92px;background:#868686;"></div><div style="left:1812px;top:354px;width:89px;height:30px;background:#868686;"></div><div class="gb" style="left:1815px;top:162px;width:80px;height:99px;"><div class="cn"></div><div class="cn r"></div><div class="hd" style="height:17px"></div><div class="hl" style="top:17px"></div></div><div class="t" style="left:1822.20px;top:166.49px;font-family:'DejaVu Sans','Liberation Sans',sans-serif;font-size:11px;line-height:14px;color:#3c3c46;font-weight:bold;transform:scaleX(1.0406);transform-origin:0 0;">Display</div><div style="left:1822px;top:183px;width:66px;height:13px;background:#f0f0f0;"></div><svg style="left:1822px;top:180px;width:14px;height:14px" viewBox="0 0 14 14"><circle cx="7" cy="7" r="5" fill="#f0f0f0"/><path d="M2.600 10.700a5.700 5.700 0 0 1 8.100-8.100" fill="none" stroke="#8c8c8c" stroke-width="1.100"/><path d="M3.500 10a4.600 4.600 0 0 1 6.500-6.500" fill="none" stroke="#5a5a5a" stroke-width="1"/><path d="M11.400 3.300a5.700 5.700 0 0 1-8.100 8.100" fill="none" stroke="#fdfdfd" stroke-width="1.100"/><path d="M10.500 4a4.600 4.600 0 0 1-6.500 6.500" fill="none" stroke="#dcdcdc" stroke-width="1"/></svg><div class="t" style="left:1841.70px;top:183.02px;font-family:'DejaVu Sans','Liberation Sans',sans-serif;font-size:11.5px;line-height:15px;color:#fff;transform:scaleX(1.0984);transform-origin:0 0;">Sensor</div><div class="t" style="left:1840.70px;top:182.02px;font-family:'DejaVu Sans','Liberation Sans',sans-serif;font-size:11.5px;line-height:15px;color:#a2a2a2;transform:scaleX(1.0984);transform-origin:0 0;">Sensor</div><div style="left:1822px;top:199px;width:66px;height:13px;background:#f0f0f0;"></div><svg style="left:1822px;top:196px;width:14px;height:14px" viewBox="0 0 14 14"><circle cx="7" cy="7" r="5" fill="#fff"/><path d="M2.600 10.700a5.700 5.700 0 0 1 8.100-8.100" fill="none" stroke="#8c8c8c" stroke-width="1.100"/><path d="M3.500 10a4.600 4.600 0 0 1 6.500-6.500" fill="none" stroke="#5a5a5a" stroke-width="1"/><path d="M11.400 3.300a5.700 5.700 0 0 1-8.100 8.100" fill="none" stroke="#fdfdfd" stroke-width="1.100"/><path d="M10.500 4a4.600 4.600 0 0 1-6.500 6.500" fill="none" stroke="#dcdcdc" stroke-width="1"/></svg><div class="t" style="left:1840.70px;top:197.72px;font-family:'DejaVu Sans','Liberation Sans',sans-serif;font-size:11.5px;line-height:15px;color:#000;transform:scaleX(0.9598);transform-origin:0 0;">RGB</div><div style="left:1822px;top:215px;width:66px;height:13px;background:#f0f0f0;"></div><svg style="left:1822px;top:212px;width:14px;height:14px" viewBox="0 0 14 14"><circle cx="7" cy="7" r="5" fill="#fff"/><path d="M2.600 10.700a5.700 5.700 0 0 1 8.100-8.100" fill="none" stroke="#8c8c8c" stroke-width="1.100"/><path d="M3.500 10a4.600 4.600 0 0 1 6.500-6.500" fill="none" stroke="#5a5a5a" stroke-width="1"/><path d="M11.400 3.300a5.700 5.700 0 0 1-8.100 8.100" fill="none" stroke="#fdfdfd" stroke-width="1.100"/><path d="M10.500 4a4.600 4.600 0 0 1-6.500 6.500" fill="none" stroke="#dcdcdc" stroke-width="1"/></svg><div class="t" style="left:1840.70px;top:213.82px;font-family:'DejaVu Sans','Liberation Sans',sans-serif;font-size:11.5px;line-height:15px;color:#000;transform:scaleX(1.0316);transform-origin:0 0;">XYZ</div><div style="left:1822px;top:231px;width:66px;height:13px;background:#f0f0f0;"></div><svg style="left:1822px;top:228px;width:14px;height:14px" viewBox="0 0 14 14"><circle cx="7" cy="7" r="5" fill="#fff"/><path d="M2.600 10.700a5.700 5.700 0 0 1 8.100-8.100" fill="none" stroke="#8c8c8c" stroke-width="1.100"/><path d="M3.500 10a4.600 4.600 0 0 1 6.500-6.500" fill="none" stroke="#5a5a5a" stroke-width="1"/><path d="M11.400 3.300a5.700 5.700 0 0 1-8.100 8.100" fill="none" stroke="#fdfdfd" stroke-width="1.100"/><path d="M10.500 4a4.600 4.600 0 0 1-6.500 6.500" fill="none" stroke="#dcdcdc" stroke-width="1"/></svg><div class="t" style="left:1840.70px;top:229.92px;font-family:'DejaVu Sans','Liberation Sans',sans-serif;font-size:11.5px;line-height:15px;color:#000;transform:scaleX(1.0429);transform-origin:0 0;">xyz</div><div style="left:1822px;top:245px;width:66px;height:11px;background:#f0f0f0;"></div><svg style="left:1822px;top:243px;width:14px;height:14px" viewBox="0 0 14 14"><circle cx="7" cy="7" r="5" fill="#fff"/><path d="M2.600 10.700a5.700 5.700 0 0 1 8.100-8.100" fill="none" stroke="#8c8c8c" stroke-width="1.100"/><path d="M3.500 10a4.600 4.600 0 0 1 6.500-6.500" fill="none" stroke="#5a5a5a" stroke-width="1"/><path d="M11.400 3.300a5.700 5.700 0 0 1-8.100 8.100" fill="none" stroke="#fdfdfd" stroke-width="1.100"/><path d="M10.500 4a4.600 4.600 0 0 1-6.500 6.500" fill="none" stroke="#dcdcdc" stroke-width="1"/><circle cx="7" cy="7" r="2" fill="#000"/></svg><div class="t" style="left:1840.70px;top:244.52px;font-family:'DejaVu Sans','Liberation Sans',sans-serif;font-size:11.5px;line-height:15px;color:#000;transform:scaleX(0.9932);transform-origin:0 0;">xyY</div><svg style="left:1818px;top:267px;width:32px;height:26px" viewBox="0 0 32 26"><path d="M1.500 0.500h6l3 3v17.500l-3.500 3.500-3-3.500h-2.500z" fill="#c4c4c4" stroke="#1a1a1a" stroke-width="0.800"/><path d="M1.500 4.500h4.500q1.500 1.500 0 2.500h-2.500v2h3q1.800 1.700 0 3.500h-3v2h3q1.800 1.800 0 3.500h-5" fill="#b4b4b4" stroke="#1a1a1a" stroke-width="0.900"/><rect x="2" y="5" width="3" height="1.200" fill="#fff"/><rect x="2" y="12" width="2" height="1.200" fill="#fff"/><path d="M1 0v22" stroke="#111" stroke-width="1.500"/><path d="M0.200 0v22" stroke="#111" stroke-width="0.800" stroke-dasharray="0.800 1"/><path d="M22 4l3 1 2.500 3h3v17.500h-6l-3-4z" fill="#c4c4c4" stroke="#1a1a1a" stroke-width="0.800"/><path d="M30 8.500h-3.500q-2 1.500 0 3h1.500v2.500h-2q-2 1.500 0 3.500h4" fill="#b4b4b4" stroke="#1a1a1a" stroke-width="0.900"/><path d="M30.800 4.500v21.500" stroke="#111" stroke-width="1.500"/><path d="M31.700 4.500v21.500" stroke="#111" stroke-width="0.800" stroke-dasharray="0.800 1"/><path d="M7 0h13l2.500 12.500 6.500 6-8.500 7.500h-6l-3.500-7.500z" fill="#1c2410"/><path d="M10.800 6l1.300 14 1.700 4M20.300 2l1.300 10.500M13 25l7.500 0.500M22.500 14l5.500 5" stroke="#e8e838" stroke-width="0.900" stroke-dasharray="0.800 1.400" fill="none"/><path d="M7.200 0.200h12.300l-2 2.800-5.300 2.600-3-2.600z" fill="#fbfb38"/><path d="M13 8.600l6-4.200 1.100 7.300-5.600 5.500z" fill="#fbfb40"/><path d="M14.500 19.200l6.300-4.400 6 4.600-6.300 6.400-3.500-0.200z" fill="#fcfc58"/><path d="M21.500 25.500l6.500-6.500" stroke="#3c8c28" stroke-width="1"/></svg><svg style="left:1819px;top:296px;width:29px;height:26px" viewBox="0 0 29 26"><defs><linearGradient id="g81" x1="0" y1="0" x2="1" y2="1"><stop offset="0" stop-color="#d8ecfc"/><stop offset="0.500" stop-color="#8cc0f0"/><stop offset="1" stop-color="#4a90d8"/></linearGradient></defs><path d="M0.500 4.500q13-6 27.500-3.500l-3.500 19q-9 6.500-19 4z" fill="url(#g81)" stroke="#b8d4ec" stroke-width="0.700"/><path d="M1 4.500q13-5.500 26.500-3.500q-12 0-25 6z" fill="#eef6fe"/><ellipse cx="13" cy="21" rx="8" ry="3" fill="#c4e0f8" opacity="0.800"/><path d="M15.500 9.500a5 5 0 0 1 7.500-1l1.500-1.500v5h-5l1.500-1.500a3 3 0 0 0-4 0.500zM22.500 16.500a5 5 0 0 1-7.500 1l-1.500 1.500v-5h5l-1.500 1.500a3 3 0 0 0 4-0.500z" fill="#18a838" stroke="#0c7c24" stroke-width="0.500"/></svg><svg style="left:1818px;top:329px;width:32px;height:22px" viewBox="0 0 32 22"><path d="M0 22v-10l2-1 1-3 2-3 1-3 2 3 1 3 2 1 1 2 2-2 1-3 1-4 2-2 2 1 1 3 2 1 1 4 2 2 1-2 2 1 1 1v11z" fill="#ffff00"/><path d="M0 22v-9h2v9z" fill="#000080"/><path d="M2 22v-10l2-2v12z" fill="#ff00ff"/><path d="M4 22v-14l2.500-4 2 4v14z" fill="#0000ff"/><path d="M8.500 22v-13l2.500 2v11z" fill="#00ffff"/><path d="M11 22v-9.500l1.500 1 2-1v9.500z" fill="#00ff00"/><path d="M14.500 22v-12l2-7 2.500 0 2 2v17z" fill="#ffff00"/><path d="M21 22v-17l2 1 1 4v12z" fill="#800000"/><path d="M24 22v-11l2 2 2-3 2 1 2 2v9z" fill="#ff0000"/></svg><div class="t" style="left:1863.50px;top:272.68px;font-family:'DejaVu Sans','Liberation Sans',sans-serif;font-size:12.5px;line-height:16px;color:#000;transform:scaleX(0.9052);transform-origin:0 0;">Go</div><div class="t" style="left:1851.00px;top:301.68px;font-family:'DejaVu Sans','Liberation Sans',sans-serif;font-size:12.5px;line-height:16px;color:#000;transform:scaleX(0.9908);transform-origin:0 0;">Delete</div><div class="t" style="left:1858.30px;top:331.68px;font-family:'DejaVu Sans','Liberation Sans',sans-serif;font-size:12.5px;line-height:16px;color:#000;transform:scaleX(0.9800);transform-origin:0 0;">Refs</div><div style="left:1818px;top:358px;width:56px;height:18px;background:#f0f0f0;"></div><div style="left:1819px;top:360px;width:12px;height:12px;background:#fff;border-top:1px solid #8c8c8c;border-left:1px solid #8c8c8c;border-right:1px solid #fff;border-bottom:1px solid #fff;"></div><div style="left:1820px;top:361px;width:10px;height:10px;border-top:1px solid #646464;border-left:1px solid #646464;border-right:1px solid #e3e3e3;border-bottom:1px solid #e3e3e3;"></div><div class="t" style="left:1836.70px;top:359.18px;font-family:'DejaVu Sans','Liberation Sans',sans-serif;font-size:12.5px;line-height:16px;color:#000;transform:scaleX(0.9745);transform-origin:0 0;">Edit</div>
<!-- selgroup -->
<div class="gb" style="left:5px;top:387px;width:378px;height:629px;"><div class="cn"></div><div class="cn r"></div><div class="hd" style="height:17px"></div><div class="hl" style="top:17px"></div></div><div class="t" style="left:12.20px;top:391.19px;font-family:'DejaVu Sans','Liberation Sans',sans-serif;font-size:11px;line-height:14px;color:#3c3c46;font-weight:bold;transform:scaleX(1.0476);transform-origin:0 0;">Selected color</div><div style="left:18px;top:409px;width:110px;height:14px;background:#f0f0f0;"></div><div class="t" style="left:18.00px;top:408.68px;font-family:'DejaVu Sans','Liberation Sans',sans-serif;font-size:12.5px;line-height:16px;color:#000;transform:scaleX(0.9654);transform-origin:0 0;">RGB Levels</div><div style="left:230px;top:407px;width:128px;height:14px;background:#f0f0f0;"></div><div class="t" style="left:241.70px;top:406.68px;font-family:'DejaVu Sans','Liberation Sans',sans-serif;font-size:12.5px;line-height:16px;color:#000;transform:scaleX(1.0092);transform-origin:0 0;">Current Measure</div><div style="left:14px;top:433px;width:200px;height:86px;background:#f0f0f0;"></div><svg style="left:14px;top:433px;width:200px;height:86px" viewBox="0 0 200 86"><path d="M0 44.500h200" stroke="#606060" stroke-width="1" stroke-dasharray="3 3"/><path d="M0 81.500L4 79.500L9 77.500L16 76.500H35L41 77.500L45.5 79.500L49 81.500z" fill="#a80000" stroke="#000" stroke-width="1" stroke-linejoin="round"/><path d="M52.5 81.500L56.5 79.500L61.5 77.500L68.5 76.500H86L92 77.500L96.5 79.500L100 81.500z" fill="#00a000" stroke="#000" stroke-width="1" stroke-linejoin="round"/><path d="M104 81.500L108 79.500L113 77.500L120 76.500H137.5L143.5 77.500L148.0 79.500L151.5 81.500z" fill="#0000a8" stroke="#000" stroke-width="1" stroke-linejoin="round"/><path d="M155 81.500L159 79.500L164 77.500L171 76.500H186L192 77.500L196.5 79.500L200 81.500z" fill="#c08800" stroke="#000" stroke-width="1" stroke-linejoin="round"/><rect x="0" y="81" width="200" height="5" fill="#000"/><g font-family="Liberation Serif,serif" font-size="12" fill="#000" text-anchor="middle" stroke="#000" stroke-width="0.250"><text x="24.300" y="73" textLength="24.800" lengthAdjust="spacingAndGlyphs">0.0%</text><text x="75.600" y="73" textLength="24.800" lengthAdjust="spacingAndGlyphs">0.0%</text><text x="126.600" y="73" textLength="24.800" lengthAdjust="spacingAndGlyphs">0.0%</text><text x="178" y="73" textLength="32.600" lengthAdjust="spacingAndGlyphs">dE 0.0</text></g></svg><div style="left:16px;top:533px;width:192px;height:74px;background:#f0f0f0;"></div><div class="t" style="left:55.00px;top:533.00px;font-family:'Liberation Sans',sans-serif;font-size:13px;line-height:17px;color:#000;font-weight:bold;transform:scaleX(0.9802);transform-origin:0 0;">No</div><div class="t" style="left:35.75px;top:549.00px;font-family:'Liberation Sans',sans-serif;font-size:13px;line-height:17px;color:#000;font-weight:bold;transform:scaleX(1.0521);transform-origin:0 0;">Measure</div><div class="t" style="left:151.00px;top:533.00px;font-family:'Liberation Sans',sans-serif;font-size:13px;line-height:17px;color:#000;font-weight:bold;transform:scaleX(0.9802);transform-origin:0 0;">No</div><div class="t" style="left:131.75px;top:549.00px;font-family:'Liberation Sans',sans-serif;font-size:13px;line-height:17px;color:#000;font-weight:bold;transform:scaleX(1.0521);transform-origin:0 0;">Measure</div><div style="left:18px;top:622px;width:42px;height:15px;background:#f0f0f0;"></div><div class="t" style="left:18.20px;top:621.67px;font-family:'DejaVu Sans','Liberation Sans',sans-serif;font-size:12.5px;line-height:16px;color:#000;transform:scaleX(1.0343);transform-origin:0 0;">Target</div><div style="left:50px;top:638px;width:116px;height:89px;background:conic-gradient(from 0deg at 50% 50%,#48ff00 0deg,#a0f000 25deg,#ffc000 48deg,#ff6000 66deg,#ff0000 90deg,#ff0048 115deg,#ff0098 135deg,#c000c0 155deg,#8000d8 180deg,#3000f8 208deg,#0000ff 225deg,#0040e0 245deg,#0090c0 270deg,#00c8a0 292deg,#00ff80 315deg,#00ff30 340deg,#48ff00 360deg);border:1px solid #000;"></div><svg style="left:50px;top:638px;width:116px;height:89px" viewBox="0 0 116 89"><rect x="17.500" y="13.500" width="81" height="62" rx="8" fill="#404040" stroke="#f4f4f4" stroke-width="1"/><path d="M49.8 40.2Q50.7 38.2 53.2 37.5" fill="none" stroke="#00e48c" stroke-width="1.100" stroke-linecap="round"/><path d="M45.2 38.6Q46.9 35.1 51.2 33.7" fill="none" stroke="#00e48c" stroke-width="1.100" stroke-linecap="round"/><path d="M40.7 36.9Q43.1 31.9 49.1 30.0" fill="none" stroke="#00e48c" stroke-width="1.100" stroke-linecap="round"/><path d="M36.1 35.3Q39.2 28.8 47.1 26.3" fill="none" stroke="#00e48c" stroke-width="1.100" stroke-linecap="round"/><path d="M31.6 33.6Q35.4 25.7 45.1 22.6" fill="none" stroke="#00e48c" stroke-width="1.100" stroke-linecap="round"/><path d="M27.1 32.0Q31.5 22.5 43.1 18.9" fill="none" stroke="#00e48c" stroke-width="1.100" stroke-linecap="round"/><path d="M63.6 37.5Q66.1 38.2 67.0 40.2" fill="none" stroke="#ffb400" stroke-width="1.100" stroke-linecap="round"/><path d="M65.6 33.7Q69.9 35.1 71.6 38.6" fill="none" stroke="#ffb400" stroke-width="1.100" stroke-linecap="round"/><path d="M67.7 30.0Q73.7 31.9 76.1 36.9" fill="none" stroke="#ffb400" stroke-width="1.100" stroke-linecap="round"/><path d="M69.7 26.3Q77.6 28.8 80.7 35.3" fill="none" stroke="#ffb400" stroke-width="1.100" stroke-linecap="round"/><path d="M71.7 22.6Q81.4 25.7 85.2 33.6" fill="none" stroke="#ffb400" stroke-width="1.100" stroke-linecap="round"/><path d="M73.7 18.9Q85.3 22.5 89.7 32.0" fill="none" stroke="#ffb400" stroke-width="1.100" stroke-linecap="round"/><path d="M53.2 51.5Q50.7 50.8 49.8 48.8" fill="none" stroke="#0a50ff" stroke-width="1.100" stroke-linecap="round"/><path d="M51.2 55.3Q46.9 53.9 45.2 50.4" fill="none" stroke="#0a50ff" stroke-width="1.100" stroke-linecap="round"/><path d="M49.1 59.0Q43.1 57.1 40.7 52.1" fill="none" stroke="#0a50ff" stroke-width="1.100" stroke-linecap="round"/><path d="M47.1 62.7Q39.2 60.2 36.1 53.7" fill="none" stroke="#0a50ff" stroke-width="1.100" stroke-linecap="round"/><path d="M45.1 66.4Q35.4 63.3 31.6 55.4" fill="none" stroke="#0a50ff" stroke-width="1.100" stroke-linecap="round"/><path d="M43.1 70.1Q31.5 66.5 27.1 57.0" fill="none" stroke="#0a50ff" stroke-width="1.100" stroke-linecap="round"/><path d="M67.0 48.8Q66.1 50.8 63.6 51.5" fill="none" stroke="#ff0a90" stroke-width="1.100" stroke-linecap="round"/><path d="M71.6 50.4Q69.9 53.9 65.6 55.3" fill="none" stroke="#ff0a90" stroke-width="1.100" stroke-linecap="round"/><path d="M76.1 52.1Q73.7 57.1 67.7 59.0" fill="none" stroke="#ff0a90" stroke-width="1.100" stroke-linecap="round"/><path d="M80.7 53.7Q77.6 60.2 69.7 62.7" fill="none" stroke="#ff0a90" stroke-width="1.100" stroke-linecap="round"/><path d="M85.2 55.4Q81.4 63.3 71.7 66.4" fill="none" stroke="#ff0a90" stroke-width="1.100" stroke-linecap="round"/><path d="M89.7 57.0Q85.3 66.5 73.7 70.1" fill="none" stroke="#ff0a90" stroke-width="1.100" stroke-linecap="round"/><path d="M49 44.500h19M58.400 37.500v14" stroke="#fff" stroke-width="0.800"/><path d="M53.500 41.500l4.900 1.500 4.900-1.500-2.500 3 2.500 3.500-4.900-1.500-4.900 1.500 2.500-3.500z" fill="#fff"/><path d="M56.500 43l3.800 3M60.300 43l-3.800 3" stroke="#000" stroke-width="1"/></svg><div style="left:221px;top:431px;width:153px;height:577px;overflow:visible;"><div style="left:-1px;top:-1px;width:154px;height:578px;background:#fff;border-top:1px solid #b4b4b4;border-left:1px solid #b4b4b4;border-right:1px solid #fff;border-bottom:1px solid #fff;"></div><div style="left:0px;top:0px;width:152px;height:576px;background:#f0f0f0;border-top:1px solid #646464;border-left:1px solid #646464;"></div><div style="left:1px;top:1px;width:151px;height:1px;background:#fff;"></div><div style="left:1px;top:1px;width:1px;height:574px;background:#fff;"></div><div style="left:2px;top:1px;width:51px;height:23px;background:#f0f0f0;border-top:1px solid #fff;"></div><div style="left:2px;top:23px;width:51px;height:1px;background:#6e6e6e;"></div><div style="left:55px;top:1px;width:78px;height:23px;background:#fff;"></div><div style="left:55px;top:23px;width:78px;height:1px;background:#c4c4c4;"></div><div class="t" style="left:5.50px;top:4.64px;font-family:'Liberation Sans',sans-serif;font-size:12px;line-height:16px;color:#000;font-weight:bold;transform:scaleX(1.0203);transform-origin:0 0;">Y cd/m²</div><div style="left:2px;top:24px;width:51px;height:23px;background:#f0f0f0;border-top:1px solid #fff;"></div><div style="left:2px;top:46px;width:51px;height:1px;background:#6e6e6e;"></div><div style="left:55px;top:24px;width:78px;height:23px;background:#fff;"></div><div style="left:55px;top:46px;width:78px;height:1px;background:#c4c4c4;"></div><div class="t" style="left:14.50px;top:27.64px;font-family:'Liberation Sans',sans-serif;font-size:12px;line-height:16px;color:#000;font-weight:bold;transform:scaleX(0.9829);transform-origin:0 0;">Y ftL</div><div style="left:2px;top:47px;width:51px;height:23px;background:#f0f0f0;border-top:1px solid #fff;"></div><div style="left:2px;top:69px;width:51px;height:1px;background:#6e6e6e;"></div><div style="left:55px;top:47px;width:78px;height:23px;background:#fff;"></div><div style="left:55px;top:69px;width:78px;height:1px;background:#c4c4c4;"></div><div class="t" style="left:21.50px;top:50.64px;font-family:'Liberation Sans',sans-serif;font-size:12px;line-height:16px;color:#000;font-weight:bold;transform:scaleX(0.9884);transform-origin:0 0;">T°</div><div style="left:2px;top:70px;width:51px;height:23px;background:#f0f0f0;border-top:1px solid #fff;"></div><div style="left:2px;top:92px;width:51px;height:1px;background:#6e6e6e;"></div><div style="left:55px;top:70px;width:78px;height:23px;background:#e1e1e1;"></div><div style="left:55px;top:92px;width:78px;height:1px;background:#c4c4c4;"></div><div class="t" style="left:23.50px;top:73.64px;font-family:'Liberation Sans',sans-serif;font-size:12px;line-height:16px;color:#000;font-weight:bold;transform:scaleX(0.9981);transform-origin:0 0;">X</div><div style="left:2px;top:93px;width:51px;height:23px;background:#f0f0f0;border-top:1px solid #fff;"></div><div style="left:2px;top:115px;width:51px;height:1px;background:#6e6e6e;"></div><div style="left:55px;top:93px;width:78px;height:23px;background:#e1e1e1;"></div><div style="left:55px;top:115px;width:78px;height:1px;background:#c4c4c4;"></div><div class="t" style="left:23.50px;top:96.64px;font-family:'Liberation Sans',sans-serif;font-size:12px;line-height:16px;color:#000;font-weight:bold;transform:scaleX(0.9981);transform-origin:0 0;">Y</div><div style="left:2px;top:116px;width:51px;height:23px;background:#f0f0f0;border-top:1px solid #fff;"></div><div style="left:2px;top:138px;width:51px;height:1px;background:#6e6e6e;"></div><div style="left:55px;top:116px;width:78px;height:23px;background:#e1e1e1;"></div><div style="left:55px;top:138px;width:78px;height:1px;background:#c4c4c4;"></div><div class="t" style="left:24.00px;top:119.64px;font-family:'Liberation Sans',sans-serif;font-size:12px;line-height:16px;color:#000;font-weight:bold;transform:scaleX(0.9532);transform-origin:0 0;">Z</div><div style="left:2px;top:139px;width:51px;height:23px;background:#f0f0f0;border-top:1px solid #fff;"></div><div style="left:2px;top:161px;width:51px;height:1px;background:#6e6e6e;"></div><div style="left:55px;top:139px;width:78px;height:23px;background:#fff;"></div><div style="left:55px;top:161px;width:78px;height:1px;background:#c4c4c4;"></div><div class="t" style="left:23.50px;top:142.64px;font-family:'Liberation Sans',sans-serif;font-size:12px;line-height:16px;color:#000;font-weight:bold;transform:scaleX(0.9225);transform-origin:0 0;">R</div><div style="left:2px;top:162px;width:51px;height:23px;background:#f0f0f0;border-top:1px solid #fff;"></div><div style="left:2px;top:184px;width:51px;height:1px;background:#6e6e6e;"></div><div style="left:55px;top:162px;width:78px;height:23px;background:#fff;"></div><div style="left:55px;top:184px;width:78px;height:1px;background:#c4c4c4;"></div><div class="t" style="left:23.25px;top:165.64px;font-family:'Liberation Sans',sans-serif;font-size:12px;line-height:16px;color:#000;font-weight:bold;transform:scaleX(0.9097);transform-origin:0 0;">G</div><div style="left:2px;top:185px;width:51px;height:23px;background:#f0f0f0;border-top:1px solid #fff;"></div><div style="left:2px;top:207px;width:51px;height:1px;background:#6e6e6e;"></div><div style="left:55px;top:185px;width:78px;height:23px;background:#fff;"></div><div style="left:55px;top:207px;width:78px;height:1px;background:#c4c4c4;"></div><div class="t" style="left:23.75px;top:188.64px;font-family:'Liberation Sans',sans-serif;font-size:12px;line-height:16px;color:#000;font-weight:bold;transform:scaleX(0.8649);transform-origin:0 0;">B</div><div style="left:2px;top:208px;width:51px;height:23px;background:#f0f0f0;border-top:1px solid #fff;"></div><div style="left:2px;top:230px;width:51px;height:1px;background:#6e6e6e;"></div><div style="left:55px;top:208px;width:78px;height:23px;background:#e1e1e1;"></div><div style="left:55px;top:230px;width:78px;height:1px;background:#c4c4c4;"></div><div class="t" style="left:24.00px;top:211.64px;font-family:'Liberation Sans',sans-serif;font-size:12px;line-height:16px;color:#000;font-weight:bold;transform:scaleX(1.0467);transform-origin:0 0;">x</div><div style="left:2px;top:231px;width:51px;height:23px;background:#f0f0f0;border-top:1px solid #fff;"></div><div style="left:2px;top:253px;width:51px;height:1px;background:#6e6e6e;"></div><div style="left:55px;top:231px;width:78px;height:23px;background:#e1e1e1;"></div><div style="left:55px;top:253px;width:78px;height:1px;background:#c4c4c4;"></div><div class="t" style="left:24.00px;top:234.64px;font-family:'Liberation Sans',sans-serif;font-size:12px;line-height:16px;color:#000;font-weight:bold;transform:scaleX(1.0467);transform-origin:0 0;">y</div><div style="left:2px;top:254px;width:51px;height:23px;background:#f0f0f0;border-top:1px solid #fff;"></div><div style="left:2px;top:276px;width:51px;height:1px;background:#6e6e6e;"></div><div style="left:55px;top:254px;width:78px;height:23px;background:#e1e1e1;"></div><div style="left:55px;top:276px;width:78px;height:1px;background:#c4c4c4;"></div><div class="t" style="left:23.50px;top:257.64px;font-family:'Liberation Sans',sans-serif;font-size:12px;line-height:16px;color:#000;font-weight:bold;transform:scaleX(0.9981);transform-origin:0 0;">Y</div><div style="left:2px;top:277px;width:51px;height:23px;background:#f0f0f0;border-top:1px solid #fff;"></div><div style="left:2px;top:299px;width:51px;height:1px;background:#6e6e6e;"></div><div style="left:55px;top:277px;width:78px;height:23px;background:#fff;"></div><div style="left:55px;top:299px;width:78px;height:1px;background:#c4c4c4;"></div><div class="t" style="left:24.00px;top:280.64px;font-family:'Liberation Sans',sans-serif;font-size:12px;line-height:16px;color:#000;font-weight:bold;transform:scaleX(1.0467);transform-origin:0 0;">x</div><div style="left:2px;top:300px;width:51px;height:23px;background:#f0f0f0;border-top:1px solid #fff;"></div><div style="left:2px;top:322px;width:51px;height:1px;background:#6e6e6e;"></div><div style="left:55px;top:300px;width:78px;height:23px;background:#fff;"></div><div style="left:55px;top:322px;width:78px;height:1px;background:#c4c4c4;"></div><div class="t" style="left:24.00px;top:303.64px;font-family:'Liberation Sans',sans-serif;font-size:12px;line-height:16px;color:#000;font-weight:bold;transform:scaleX(1.0467);transform-origin:0 0;">y</div><div style="left:2px;top:323px;width:51px;height:23px;background:#f0f0f0;border-top:1px solid #fff;"></div><div style="left:2px;top:345px;width:51px;height:1px;background:#6e6e6e;"></div><div style="left:55px;top:323px;width:78px;height:23px;background:#fff;"></div><div style="left:55px;top:345px;width:78px;height:1px;background:#c4c4c4;"></div><div class="t" style="left:24.50px;top:326.64px;font-family:'Liberation Sans',sans-serif;font-size:12px;line-height:16px;color:#000;font-weight:bold;">z</div><div style="left:2px;top:346px;width:51px;height:23px;background:#f0f0f0;border-top:1px solid #fff;"></div><div style="left:2px;top:368px;width:51px;height:1px;background:#6e6e6e;"></div><div style="left:55px;top:346px;width:78px;height:23px;background:#e1e1e1;"></div><div style="left:55px;top:368px;width:78px;height:1px;background:#c4c4c4;"></div><div class="t" style="left:24.50px;top:349.64px;font-family:'Liberation Sans',sans-serif;font-size:12px;line-height:16px;color:#000;font-weight:bold;transform:scaleX(0.8170);transform-origin:0 0;">L</div><div style="left:2px;top:369px;width:51px;height:23px;background:#f0f0f0;border-top:1px solid #fff;"></div><div style="left:2px;top:391px;width:51px;height:1px;background:#6e6e6e;"></div><div style="left:55px;top:369px;width:78px;height:23px;background:#e1e1e1;"></div><div style="left:55px;top:391px;width:78px;height:1px;background:#c4c4c4;"></div><div class="t" style="left:24.25px;top:372.64px;font-family:'Liberation Sans',sans-serif;font-size:12px;line-height:16px;color:#000;font-weight:bold;transform:scaleX(0.9720);transform-origin:0 0;">a</div><div style="left:2px;top:392px;width:51px;height:23px;background:#f0f0f0;border-top:1px solid #fff;"></div><div style="left:2px;top:414px;width:51px;height:1px;background:#6e6e6e;"></div><div style="left:55px;top:392px;width:78px;height:23px;background:#e1e1e1;"></div><div style="left:55px;top:414px;width:78px;height:1px;background:#c4c4c4;"></div><div class="t" style="left:24.00px;top:395.64px;font-family:'Liberation Sans',sans-serif;font-size:12px;line-height:16px;color:#000;font-weight:bold;transform:scaleX(0.9532);transform-origin:0 0;">b</div><div style="left:2px;top:415px;width:51px;height:23px;background:#f0f0f0;border-top:1px solid #fff;"></div><div style="left:2px;top:437px;width:51px;height:1px;background:#6e6e6e;"></div><div style="left:55px;top:415px;width:78px;height:23px;background:#fff;"></div><div style="left:55px;top:437px;width:78px;height:1px;background:#c4c4c4;"></div><div class="t" style="left:24.50px;top:418.64px;font-family:'Liberation Sans',sans-serif;font-size:12px;line-height:16px;color:#000;font-weight:bold;transform:scaleX(0.8170);transform-origin:0 0;">L</div><div style="left:2px;top:438px;width:51px;height:23px;background:#f0f0f0;border-top:1px solid #fff;"></div><div style="left:2px;top:460px;width:51px;height:1px;background:#6e6e6e;"></div><div style="left:55px;top:438px;width:78px;height:23px;background:#fff;"></div><div style="left:55px;top:460px;width:78px;height:1px;background:#c4c4c4;"></div><div class="t" style="left:23.75px;top:441.64px;font-family:'Liberation Sans',sans-serif;font-size:12px;line-height:16px;color:#000;font-weight:bold;transform:scaleX(0.8649);transform-origin:0 0;">C</div><div style="left:2px;top:461px;width:51px;height:23px;background:#f0f0f0;border-top:1px solid #fff;"></div><div style="left:2px;top:483px;width:51px;height:1px;background:#6e6e6e;"></div><div style="left:55px;top:461px;width:78px;height:23px;background:#fff;"></div><div style="left:55px;top:483px;width:78px;height:1px;background:#c4c4c4;"></div><div class="t" style="left:23.00px;top:464.64px;font-family:'Liberation Sans',sans-serif;font-size:12px;line-height:16px;color:#000;font-weight:bold;transform:scaleX(1.0378);transform-origin:0 0;">H</div><div style="left:2px;top:484px;width:51px;height:23px;background:#f0f0f0;border-top:1px solid #fff;"></div><div style="left:2px;top:506px;width:51px;height:1px;background:#6e6e6e;"></div><div style="left:55px;top:484px;width:78px;height:23px;background:#e1e1e1;"></div><div style="left:55px;top:506px;width:78px;height:1px;background:#c4c4c4;"></div><div class="t" style="left:24.50px;top:487.64px;font-family:'Liberation Sans',sans-serif;font-size:12px;line-height:16px;color:#000;font-weight:bold;transform:scaleX(0.8170);transform-origin:0 0;">L</div><div class="t" style="left:99.50px;top:487.04px;font-family:'Liberation Sans',sans-serif;font-size:12px;line-height:16px;color:#000;transform:scaleX(0.8719);transform-origin:0 0;">323.96</div><div style="left:2px;top:507px;width:51px;height:23px;background:#f0f0f0;border-top:1px solid #fff;"></div><div style="left:2px;top:529px;width:51px;height:1px;background:#6e6e6e;"></div><div style="left:55px;top:507px;width:78px;height:23px;background:#e1e1e1;"></div><div style="left:55px;top:529px;width:78px;height:1px;background:#c4c4c4;"></div><div class="t" style="left:22.00px;top:510.64px;font-family:'Liberation Sans',sans-serif;font-size:12px;line-height:16px;color:#000;font-weight:bold;transform:scaleX(1.1000);transform-origin:0 0;">M</div><div class="t" style="left:99.50px;top:510.04px;font-family:'Liberation Sans',sans-serif;font-size:12px;line-height:16px;color:#000;transform:scaleX(0.8719);transform-origin:0 0;">492.57</div><div style="left:2px;top:530px;width:51px;height:23px;background:#f0f0f0;border-top:1px solid #fff;"></div><div style="left:2px;top:552px;width:51px;height:1px;background:#6e6e6e;"></div><div style="left:55px;top:530px;width:78px;height:23px;background:#e1e1e1;"></div><div style="left:55px;top:552px;width:78px;height:1px;background:#c4c4c4;"></div><div class="t" style="left:24.00px;top:533.64px;font-family:'Liberation Sans',sans-serif;font-size:12px;line-height:16px;color:#000;font-weight:bold;transform:scaleX(0.8733);transform-origin:0 0;">S</div><div class="t" style="left:99.50px;top:533.04px;font-family:'Liberation Sans',sans-serif;font-size:12px;line-height:16px;color:#000;transform:scaleX(0.8719);transform-origin:0 0;">324.01</div><div style="left:53px;top:2px;width:2px;height:552px;background:#6e6e6e;"></div><div style="left:133px;top:2px;width:1px;height:552px;background:#c0c0c0;"></div><div style="left:2px;top:553px;width:132px;height:23px;background:#a0a0a0;"></div><div style="left:135px;top:2px;width:17px;height:574px;background:#f0f0f0;"></div><svg style="left:138px;top:7px;width:10px;height:7px" viewBox="0 0 10 7"><path d="M0.500 6.500h9l-4.500-6z" fill="#a6a6a6"/></svg><svg style="left:138px;top:565px;width:10px;height:7px" viewBox="0 0 10 7"><path d="M0.500 0.500h9l-4.500 6z" fill="#a6a6a6"/></svg></div>
<!-- infogroup -->
<div class="gb" style="left:391px;top:387px;width:1504px;height:629px;"><div class="cn"></div><div class="cn r"></div><div class="hd" style="height:17px"></div><div class="hl" style="top:17px"></div></div><div class="t" style="left:398.10px;top:391.19px;font-family:'DejaVu Sans','Liberation Sans',sans-serif;font-size:11px;line-height:14px;color:#3c3c46;font-weight:bold;">Information</div><div style="left:396px;top:409px;width:302px;height:23px;background:#fff;border-top:1px solid #8c8c8c;border-left:1px solid #8c8c8c;border-right:1px solid #fff;border-bottom:1px solid #fff;"></div><div style="left:397px;top:410px;width:300px;height:21px;border-top:1px solid #646464;border-left:1px solid #646464;border-right:1px solid #e3e3e3;border-bottom:1px solid #e3e3e3;"></div><div style="left:398px;top:411px;width:298px;height:1px;background:#909090;"></div><div style="left:398px;top:411px;width:1px;height:19px;background:#909090;"></div><div style="left:679px;top:412px;width:1px;height:18px;background:#e0e0e0;"></div><div class="t" style="left:401.30px;top:413.68px;font-family:'DejaVu Sans','Liberation Sans',sans-serif;font-size:12.5px;line-height:16px;color:#000;transform:scaleX(1.0027);transform-origin:0 0;">Color temperature</div><div style="left:680px;top:412px;width:17px;height:18px;background:#f0f0f0;border-top:1px solid #fff;border-left:1px solid #fff;border-right:1px solid #696969;border-bottom:1px solid #696969;"></div><div style="left:681px;top:413px;width:15px;height:16px;border-right:1px solid #a0a0a0;border-bottom:1px solid #a0a0a0;"></div><svg style="left:685.0px;top:419.2px;width:7px;height:4px" viewBox="0 0 7 4"><path d="M0 0h7l-3.5 4z" fill="#000"/></svg><div style="left:398px;top:439px;width:1496px;height:570px;background:#fff;border-top:1px solid #8c8c8c;border-left:1px solid #8c8c8c;border-right:1px solid #fff;border-bottom:1px solid #fff;"></div><div style="left:399px;top:440px;width:1494px;height:568px;border-top:1px solid #646464;border-left:1px solid #646464;border-right:1px solid #e3e3e3;border-bottom:1px solid #e3e3e3;"></div><div style="left:400px;top:441px;width:1492px;height:566px;border-top:2px solid #a8a8a8;border-left:2px solid #a8a8a8;border-right:2px solid #fff;border-bottom:2px solid #fff;"></div><svg style="left:402px;top:443px;width:1488px;height:562px" viewBox="0 0 1488 562"><defs><linearGradient id="cg" x1="0" y1="0" x2="1" y2="0"><stop offset="0" stop-color="#202020"/><stop offset="1" stop-color="#ffffff"/></linearGradient></defs><rect x="0" y="0" width="1488" height="562" fill="url(#cg)"/><text x="684.6" y="14" font-family="Liberation Sans,sans-serif" font-weight="bold" font-size="15" fill="#e6e600" textLength="133.600" lengthAdjust="spacingAndGlyphs">Color Temperature</text><text x="1323.5" y="520" font-family="Liberation Sans,sans-serif" font-weight="bold" font-size="15" fill="#9a9a9a" textLength="154.500" lengthAdjust="spacingAndGlyphs">hcfr.sourceforge.net</text><rect x="0" y="0" width="1" height="562" fill="#064848"/><rect x="148" y="0" width="1" height="562" fill="#064848"/><rect x="297" y="0" width="1" height="562" fill="#064848"/><rect x="446" y="0" width="1" height="562" fill="#064848"/><rect x="595" y="0" width="1" height="562" fill="#064848"/><rect x="744" y="0" width="1" height="562" fill="#064848"/><rect x="892" y="0" width="1" height="562" fill="#064848"/><rect x="1041" y="0" width="1" height="562" fill="#064848"/><rect x="1190" y="0" width="1" height="562" fill="#064848"/><rect x="1339" y="0" width="1" height="562" fill="#064848"/><rect x="0" y="43" width="1488" height="1" fill="#064848"/><rect x="0" y="86" width="1488" height="1" fill="#064848"/><rect x="0" y="129" width="1488" height="1" fill="#064848"/><rect x="0" y="172" width="1488" height="1" fill="#064848"/><rect x="0" y="216" width="1488" height="1" fill="#064848"/><rect x="0" y="259" width="1488" height="1" fill="#064848"/><rect x="0" y="302" width="1488" height="1" fill="#064848"/><rect x="0" y="345" width="1488" height="1" fill="#064848"/><rect x="0" y="389" width="1488" height="1" fill="#064848"/><rect x="0" y="432" width="1488" height="1" fill="#064848"/><rect x="0" y="475" width="1488" height="1" fill="#064848"/><rect x="0" y="518" width="1488" height="1" fill="#064848"/><path d="M0 259.5H1488" stroke="#fff" stroke-width="1" stroke-dasharray="3 3"/><rect x="0" y="255" width="4" height="8" fill="#f0f0f0"/><rect x="1484" y="255" width="4" height="8" fill="#e4e4e4"/><g font-family="Liberation Serif,serif" font-size="14" fill="#d4d4d4"><text x="2.6" y="39" textLength="38" lengthAdjust="spacingAndGlyphs">9000K</text><text x="2.6" y="82" textLength="38" lengthAdjust="spacingAndGlyphs">8500K</text><text x="2.6" y="125" textLength="38" lengthAdjust="spacingAndGlyphs">8000K</text><text x="2.6" y="168" textLength="38" lengthAdjust="spacingAndGlyphs">7500K</text><text x="2.6" y="212" textLength="38" lengthAdjust="spacingAndGlyphs">7000K</text><text x="2.6" y="255" textLength="38" lengthAdjust="spacingAndGlyphs">6500K</text><text x="2.6" y="298" textLength="38" lengthAdjust="spacingAndGlyphs">6000K</text><text x="2.6" y="341" textLength="38" lengthAdjust="spacingAndGlyphs">5500K</text><text x="2.6" y="385" textLength="38" lengthAdjust="spacingAndGlyphs">5000K</text><text x="2.6" y="428" textLength="38" lengthAdjust="spacingAndGlyphs">4500K</text><text x="2.6" y="471" textLength="38" lengthAdjust="spacingAndGlyphs">4000K</text><text x="2.6" y="514" textLength="38" lengthAdjust="spacingAndGlyphs">3500K</text></g><g font-family="Liberation Serif,serif" font-size="14"><text x="150" y="558" fill="#e2e2e2" textLength="61.500" lengthAdjust="spacingAndGlyphs">10% White</text><text x="299" y="558" fill="#c4c4c4" textLength="61.500" lengthAdjust="spacingAndGlyphs">20% White</text><text x="448" y="558" fill="#aaaaaa" textLength="61.500" lengthAdjust="spacingAndGlyphs">30% White</text><text x="597" y="558" fill="#949494" textLength="61.500" lengthAdjust="spacingAndGlyphs">40% White</text><text x="746" y="558" fill="#838383" textLength="61.500" lengthAdjust="spacingAndGlyphs">50% White</text><text x="894" y="558" fill="#6e6e6e" textLength="61.500" lengthAdjust="spacingAndGlyphs">60% White</text><text x="1043" y="558" fill="#585858" textLength="61.500" lengthAdjust="spacingAndGlyphs">70% White</text><text x="1192" y="558" fill="#444444" textLength="61.500" lengthAdjust="spacingAndGlyphs">80% White</text><text x="1341" y="558" fill="#303030" textLength="61.500" lengthAdjust="spacingAndGlyphs">90% White</text></g><path d="M149.0 41.0 L224.3 153.8 L298.0 214.8 L373.0 228.0 L448.0 233.0 L523.0 240.6 L597.2 242.8 L671.9 242.8 L746.7 243.9 L814.7 243.9 L889.7 243.9 L964.2 239.8 L1039.2 237.6 L1114.0 236.8 L1189.0 234.6 L1263.0 232.7 L1337.7 230.6 L1412.7 228.7 L1486.4 226.5" fill="none" stroke="#00ffff" stroke-width="2" stroke-linejoin="round"/><rect x="145" y="37" width="8" height="8" fill="#00ffff"/><rect x="220" y="150" width="8" height="8" fill="#00ffff"/><rect x="294" y="211" width="8" height="8" fill="#00ffff"/><rect x="369" y="224" width="8" height="8" fill="#00ffff"/><rect x="444" y="229" width="8" height="8" fill="#00ffff"/><rect x="519" y="237" width="8" height="8" fill="#00ffff"/><rect x="593" y="239" width="8" height="8" fill="#00ffff"/><rect x="668" y="239" width="8" height="8" fill="#00ffff"/><rect x="743" y="240" width="8" height="8" fill="#00ffff"/><rect x="811" y="240" width="8" height="8" fill="#00ffff"/><rect x="886" y="240" width="8" height="8" fill="#00ffff"/><rect x="960" y="236" width="8" height="8" fill="#00ffff"/><rect x="1035" y="234" width="8" height="8" fill="#00ffff"/><rect x="1110" y="233" width="8" height="8" fill="#00ffff"/><rect x="1185" y="231" width="8" height="8" fill="#00ffff"/><rect x="1259" y="229" width="8" height="8" fill="#00ffff"/><rect x="1334" y="227" width="8" height="8" fill="#00ffff"/><rect x="1409" y="225" width="8" height="8" fill="#00ffff"/><rect x="1482" y="223" width="8" height="8" fill="#00ffff"/></svg>
<!-- bottom -->
<div style="left:0px;top:1040px;width:1920px;height:2px;background:#fff;"></div><div style="left:0px;top:1042px;width:1920px;height:19px;background:#f0f0f0;"></div><svg style="left:0;top:1040px;width:1920px;height:22px" viewBox="0 0 1920 22"><path d="M54 2.500H1920" stroke="#000" stroke-width="1"/><path d="M119.5 2.500L128.0 20.500H197.0L205.5 2.500z" fill="#f0f0f0" stroke="none"/><path d="M119.5 2.500L128.0 20.500H197.0L205.5 2.500" fill="none" stroke="#000" stroke-width="1"/><path d="M128.0 20.500H197.0" stroke="#8a8a8a" stroke-width="1"/><path d="M119.5 2.500H205.5" stroke="#000" stroke-width="1"/><path d="M196.5 2.500L205.0 20.500H301.5L310 2.500z" fill="#f0f0f0" stroke="none"/><path d="M196.5 2.500L205.0 20.500H301.5L310 2.500" fill="none" stroke="#000" stroke-width="1"/><path d="M205.0 20.500H301.5" stroke="#8a8a8a" stroke-width="1"/><path d="M196.5 2.500H310" stroke="#000" stroke-width="1"/><path d="M301.5 2.500L310.0 20.500H376.0L384.5 2.500z" fill="#f0f0f0" stroke="none"/><path d="M301.5 2.500L310.0 20.500H376.0L384.5 2.500" fill="none" stroke="#000" stroke-width="1"/><path d="M310.0 20.500H376.0" stroke="#8a8a8a" stroke-width="1"/><path d="M301.5 2.500H384.5" stroke="#000" stroke-width="1"/><path d="M54.5 2.500L63.0 20.500H119.5L128 2.500z" fill="#fff" stroke="none"/><path d="M54.5 2.500L63.0 20.500H119.5L128 2.500" fill="none" stroke="#000" stroke-width="1"/><path d="M63.0 20.500H119.5" stroke="#8a8a8a" stroke-width="1"/><rect x="55.500" y="0" width="72" height="3" fill="#fff"/></svg><div style="left:0px;top:1042px;width:54px;height:19px;background:#000;"></div><div style="left:1px;top:1043px;width:52px;height:17px;background:#808080;"></div><div style="left:1px;top:1043px;width:16px;height:17px;background:#f0f0f0;border-top:1px solid #fff;border-left:1px solid #fff;border-right:1px solid #a0a0a0;border-bottom:1px solid #a0a0a0;"></div><div style="left:18px;top:1043px;width:16px;height:17px;background:#f0f0f0;border-top:1px solid #fff;border-left:1px solid #fff;border-right:1px solid #a0a0a0;border-bottom:1px solid #a0a0a0;"></div><div style="left:35px;top:1043px;width:18px;height:17px;background:#f0f0f0;border-top:1px solid #fff;border-left:1px solid #fff;border-right:1px solid #a0a0a0;border-bottom:1px solid #a0a0a0;"></div><svg style="left:0;top:1042px;width:55px;height:19px" viewBox="0 0 55 19"><path d="M5.500 5.500l8 8M13.500 5.500l-8 8" stroke="#000" stroke-width="1.300"/><path d="M28.500 5.500v8l-4.500-4zM41.500 5.500v8l4.500-4z" fill="#000"/></svg><div class="t" style="left:67.00px;top:1044.49px;font-family:'Liberation Sans',sans-serif;font-size:11px;line-height:14px;color:#000;font-weight:bold;transform:scaleX(0.9554);transform-origin:0 0;">Measures</div><div class="t" style="left:135.00px;top:1044.49px;font-family:'Liberation Sans',sans-serif;font-size:11px;line-height:14px;color:#000;transform:scaleX(0.8417);transform-origin:0 0;">CIE Diagram</div><div class="t" style="left:215.50px;top:1044.49px;font-family:'Liberation Sans',sans-serif;font-size:11px;line-height:14px;color:#000;transform:scaleX(0.8403);transform-origin:0 0;">Color temperature</div><div class="t" style="left:318.00px;top:1044.49px;font-family:'Liberation Sans',sans-serif;font-size:11px;line-height:14px;color:#000;transform:scaleX(0.8517);transform-origin:0 0;">RGB Levels</div><div style="left:0px;top:1061px;width:1920px;height:19px;background:linear-gradient(90deg,#e4ebf6 0%,#e9eff9 30%,#eef2fb 70%,#eff3fb 100%);"></div><div class="t" style="left:2.50px;top:1064.34px;font-family:'Liberation Sans',sans-serif;font-size:12px;line-height:16px;color:#000;transform:scaleX(0.8937);transform-origin:0 0;">Ready</div><div style="left:1743px;top:1062px;width:74px;height:19px;border-top:1px solid #a4b6d2;border-left:1px solid #a4b6d2;border-right:1px solid #fff;border-bottom:1px solid #fff;"></div><div style="left:1820px;top:1062px;width:28px;height:19px;border-top:1px solid #a4b6d2;border-left:1px solid #a4b6d2;border-right:1px solid #fff;border-bottom:1px solid #fff;"></div><div style="left:1851px;top:1062px;width:33px;height:19px;border-top:1px solid #a4b6d2;border-left:1px solid #a4b6d2;border-right:1px solid #fff;border-bottom:1px solid #fff;"></div><div style="left:1887px;top:1062px;width:33px;height:19px;border-top:1px solid #a4b6d2;border-left:1px solid #a4b6d2;border-right:1px solid #fff;border-bottom:1px solid #fff;"></div><div class="t" style="left:1853.90px;top:1064.14px;font-family:'Liberation Sans',sans-serif;font-size:12px;line-height:16px;color:#000;transform:scaleX(0.9697);transform-origin:0 0;">NUM</div><div style="left:1846px;top:1044px;width:12px;height:12px;background:#fff;border-top:1px solid #8c8c8c;border-left:1px solid #8c8c8c;border-right:1px solid #fff;border-bottom:1px solid #fff;"></div><div style="left:1847px;top:1045px;width:10px;height:10px;border-top:1px solid #646464;border-left:1px solid #646464;border-right:1px solid #e3e3e3;border-bottom:1px solid #e3e3e3;"></div><div class="t" style="left:1864.80px;top:1043.44px;font-family:'Liberation Sans',sans-serif;font-size:12px;line-height:16px;color:#000;transform:scaleX(0.8939);transform-origin:0 0;">Reference</div><svg style="left:1750px;top:1043px;width:17px;height:16px" viewBox="0 0 17 16"><path d="M1.500 1.500h13v7.500h-0.500l0 3.500-1.500 1.500h-3l-1-1.500v-3h-1v3l-1.500 1.500h-2.500l-1.500-1.500v-3.500h-0.500z" fill="#808000" stroke="#0a0a0a" stroke-width="1"/><path d="M9 9.800h4.500v3l-1 1h-2.500l-1-1z" fill="#ffff00"/><rect x="2.500" y="2.500" width="9" height="6" fill="#f8f8f0"/><path d="M3 5.200q2-2.800 5-1.200l0.500-1.300 2.500 3.800-3.800 0.800 0.600-1.400q-2.500-1-4.800 0.800z" fill="#ff1818"/><rect x="6.500" y="5.500" width="4" height="3" fill="#ff1818"/></svg>
</div>
</body></html>
